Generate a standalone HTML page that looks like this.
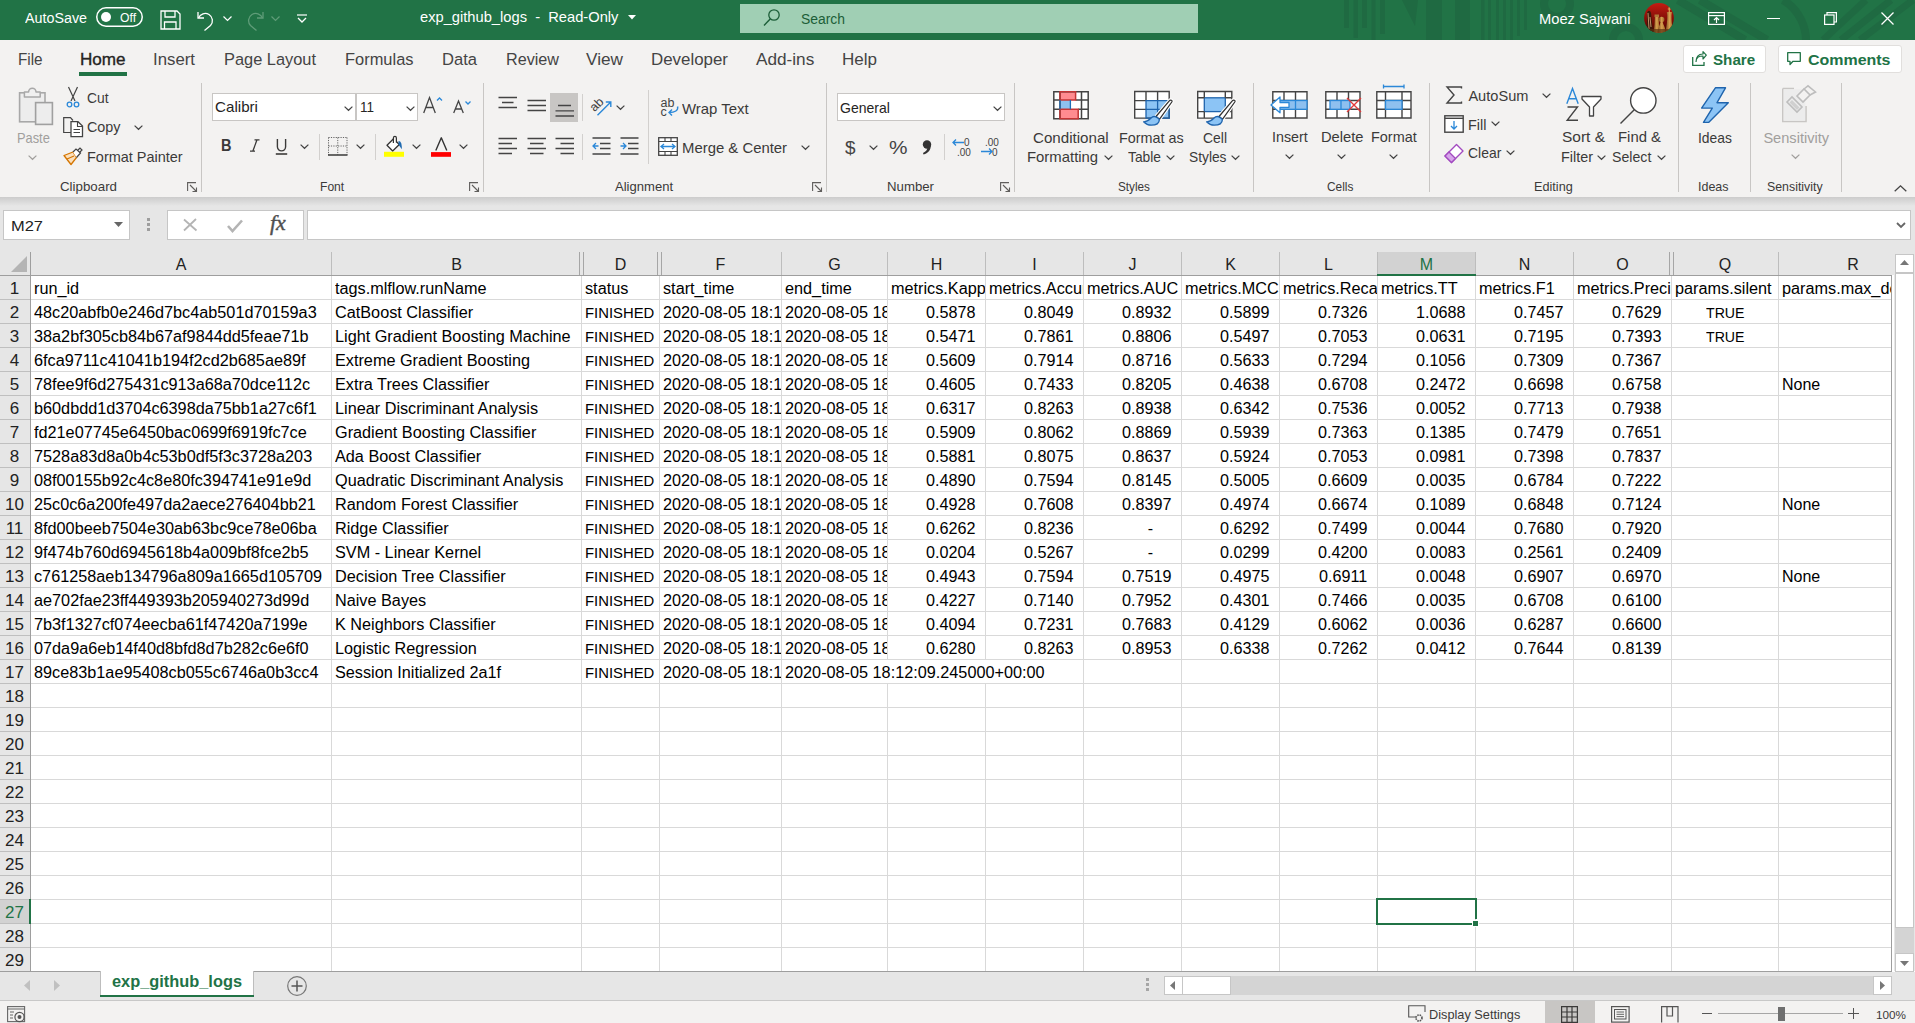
<!DOCTYPE html><html><head><meta charset="utf-8"><style>
html,body{margin:0;padding:0;width:1915px;height:1023px;overflow:hidden;background:#fff;font-family:"Liberation Sans",sans-serif;}
.t{position:absolute;white-space:pre;line-height:normal;}
.r{position:absolute;}
svg.r{overflow:visible}
</style></head><body>
<div class="r" style="left:0px;top:0px;width:1915px;height:40px;background:#217346"></div>
<svg class="r" style="left:0;top:0" width="1915" height="40"><rect x="1344" y="0" width="5" height="28" fill="#1f6a42"/><rect x="1353.5" y="0" width="4.5" height="38" fill="#1f6a42"/><rect x="1362" y="0" width="5" height="28" fill="#1f6a42"/><rect x="1371.5" y="0" width="4.0" height="40" fill="#1f6a42"/><rect x="1380" y="0" width="5" height="34" fill="#1f6a42"/><rect x="1426" y="0" width="16" height="40" fill="#1f6a42"/><rect x="1455" y="0" width="15" height="40" fill="#1f6a42"/><rect x="1481" y="0" width="3.5" height="40" fill="#1f6a42"/><rect x="1488" y="0" width="3" height="40" fill="#1f6a42"/><rect x="1496" y="0" width="3" height="40" fill="#1f6a42"/><rect x="1503" y="0" width="3" height="40" fill="#1f6a42"/><rect x="1510" y="0" width="3" height="40" fill="#1f6a42"/><rect x="1517" y="0" width="3" height="36" fill="#1f6a42"/><rect x="1524" y="0" width="3" height="30" fill="#1f6a42"/><path d="M1402 0 H1418 L1415 26 Z" fill="#1f6a42"/><circle cx="1557" cy="4" r="13" fill="none" stroke="#1f6a42" stroke-width="8"/><circle cx="1626" cy="40" r="13" fill="none" stroke="#1f6a42" stroke-width="8"/><path d="M1678 0 L1745 40 M1700 0 L1767 40" stroke="#1f6a42" stroke-width="8"/><path d="M1783 0 C1800 10 1806 28 1806 40" stroke="#1f6a42" stroke-width="8" fill="none"/><path d="M1823 40 L1866 0 M1841 40 L1891 0 M1860 40 L1913 0" stroke="#1f6a42" stroke-width="7"/></svg>
<div class="r" style="left:740px;top:4px;width:458px;height:29px;background:#a0cfb4"></div>
<div class="t" style="left:25.00px;top:9.90px;font-size:14.7px;color:#fff;transform:scaleX(0.9733);transform-origin:0 0;">AutoSave</div>
<svg class="r" style="left:96px;top:7px" width="47" height="20" viewBox="0 0 47 20" fill="none"><rect x="0.75" y="0.75" width="45.5" height="18.5" rx="9.25" stroke="#fff" stroke-width="1.5"/><circle cx="10" cy="10" r="5" fill="#fff"/></svg>
<div class="t" style="left:119.70px;top:10.08px;font-size:13.5px;color:#fff;transform:scaleX(0.9014);transform-origin:0 0;">Off</div>
<svg class="r" style="left:160px;top:10px" width="21" height="20" viewBox="0 0 21 20" fill="none"><path d="M1 1 H17 L20 4 V19 H1 Z" stroke="#fff" stroke-width="1.3"/><path d="M5 1 V7 H15 V1" stroke="#fff" stroke-width="1.3"/><path d="M4.5 19 V12 H16 V19" stroke="#fff" stroke-width="1.3"/></svg>
<svg class="r" style="left:196px;top:10px" width="20" height="20" viewBox="0 0 20 20" fill="none"><path d="M2 2 V8 H8" stroke="#fff" stroke-width="1.3"/><path d="M2.5 8 A7.2 7.2 0 1 1 14.5 15.5 L8.5 20.5" stroke="#fff" stroke-width="1.3"/></svg>
<svg class="r" style="left:223px;top:16px" width="9" height="5" viewBox="0 0 9 5" fill="none"><path d="M0.5 0.5 L4.5 4.5 L8.5 0.5" stroke="#fff" stroke-width="1.2"/></svg>
<svg class="r" style="left:245px;top:10px" width="20" height="20" viewBox="0 0 20 20" fill="none"><path d="M18 2 V8 H12" stroke="#5f9c78" stroke-width="1.3"/><path d="M17.5 8 A7.2 7.2 0 1 0 5.5 15.5 L11.5 20.5" stroke="#5f9c78" stroke-width="1.3"/></svg>
<svg class="r" style="left:271px;top:16px" width="9" height="5" viewBox="0 0 9 5" fill="none"><path d="M0.5 0.5 L4.5 4.5 L8.5 0.5" stroke="#5f9c78" stroke-width="1.2"/></svg>
<svg class="r" style="left:297px;top:14px" width="10" height="10" viewBox="0 0 10 10" fill="none"><path d="M0 1 H10" stroke="#fff" stroke-width="1.2"/><path d="M1 4 L5 8 L9 4" stroke="#fff" stroke-width="1.3"/></svg>
<div class="t" style="left:420.30px;top:8.69px;font-size:14.6px;color:#fff;transform:scaleX(1.0065);transform-origin:0 0;">exp_github_logs  -  Read-Only</div>
<svg class="r" style="left:628px;top:15px" width="8" height="5" viewBox="0 0 8 5" fill="none"><path d="M0 0 H8 L4 4.5 Z" fill="#fff"/></svg>
<svg class="r" style="left:763px;top:9px" width="17" height="18" viewBox="0 0 17 18" fill="none"><circle cx="11" cy="6" r="5.2" stroke="#1c5e38" stroke-width="1.3"/><path d="M7.4 9.8 L1 16.5" stroke="#1c5e38" stroke-width="1.4"/></svg>
<div class="t" style="left:800.50px;top:10.83px;font-size:14px;color:#1c5e38;transform:scaleX(0.9922);transform-origin:0 0;">Search</div>
<div class="t" style="left:1539.00px;top:10.79px;font-size:14.6px;color:#fff;transform:scaleX(1.0074);transform-origin:0 0;">Moez Sajwani</div>
<svg class="r" style="left:1644px;top:3px" width="30" height="30" viewBox="0 0 30 30"><defs><clipPath id="av"><circle cx="15" cy="15" r="14.9"/></clipPath><linearGradient id="ag" x1="0" y1="0" x2="0" y2="1"><stop offset="0" stop-color="#c41c12"/><stop offset="0.7" stop-color="#6e0a05"/><stop offset="1" stop-color="#3a0804"/></linearGradient><linearGradient id="gd" x1="0" y1="0" x2="1" y2="0"><stop offset="0" stop-color="#7a4a1a"/><stop offset="0.5" stop-color="#d8a050"/><stop offset="1" stop-color="#9a6020"/></linearGradient></defs><g clip-path="url(#av)"><rect width="30" height="30" fill="url(#ag)"/><path d="M3 30 V10 C4 7 6 7 7 10 L8 20 L9 30 Z" fill="#3a1a0a"/><path d="M4 10 L5 26 M6 14 L7 24" stroke="#e0b080" stroke-width="0.8"/><path d="M9.5 30 L10.5 22 L11 13 H14.5 L15 22 L16 30 Z" fill="url(#gd)"/><rect x="10.5" y="11.5" width="4.5" height="2.5" fill="#b07838"/><circle cx="17.6" cy="16.5" r="2.8" fill="url(#gd)"/><path d="M13.5 30 C14 24 16 22 16.5 19 H18.7 C19.2 22 21.5 24 22 30 Z" fill="url(#gd)"/><path d="M21.5 30 C22 24 23.5 20 23.3 12 L22.8 9 H28 L27.5 12 C27.3 20 28.5 24 29.5 30 Z" fill="url(#gd)"/><path d="M25.3 4 V9 M23.8 6 H26.8" stroke="#d8a050" stroke-width="1.2"/><rect x="0" y="26" width="30" height="4" fill="#5a3010" opacity="0.7"/></g></svg>
<svg class="r" style="left:1708px;top:12px" width="17" height="13" viewBox="0 0 17 13" fill="none"><rect x="0.6" y="0.6" width="15.8" height="11.8" stroke="#fff" stroke-width="1.2"/><path d="M0.6 3.6 H16.4" stroke="#fff" stroke-width="1.2"/><path d="M8.5 11 V5.5 M6 8 L8.5 5.5 L11 8" stroke="#fff" stroke-width="1.2"/></svg>
<div class="r" style="left:1767px;top:18px;width:13px;height:1.3px;background:#fff"></div>
<svg class="r" style="left:1824px;top:12px" width="13" height="13" viewBox="0 0 13 13" fill="none"><rect x="0.6" y="3" width="9.4" height="9.4" stroke="#fff" stroke-width="1.2"/><path d="M3 3 V0.6 H12.4 V10 H10" stroke="#fff" stroke-width="1.2"/></svg>
<svg class="r" style="left:1881px;top:12px" width="13" height="13" viewBox="0 0 13 13" fill="none"><path d="M0.5 0.5 L12.5 12.5 M12.5 0.5 L0.5 12.5" stroke="#fff" stroke-width="1.3"/></svg>
<div class="r" style="left:0px;top:40px;width:1915px;height:157px;background:#f3f2f1"></div>
<div class="r" style="left:0px;top:197px;width:1915px;height:9px;background:linear-gradient(#cccccc,#e6e6e6)"></div>
<div class="t" style="left:18.00px;top:49.13px;font-size:17.2px;color:#444;transform:scaleX(0.8885);transform-origin:0 0;">File</div>
<div class="t" style="left:79.70px;top:49.13px;font-size:17.2px;color:#252423;transform:scaleX(0.9947);transform-origin:0 0;-webkit-text-stroke:0.35px #252423;">Home</div>
<div class="t" style="left:153.00px;top:49.13px;font-size:17.2px;color:#444;transform:scaleX(0.9767);transform-origin:0 0;">Insert</div>
<div class="t" style="left:224.00px;top:49.13px;font-size:17.2px;color:#444;transform:scaleX(0.9528);transform-origin:0 0;">Page Layout</div>
<div class="t" style="left:345.00px;top:49.13px;font-size:17.2px;color:#444;transform:scaleX(0.9564);transform-origin:0 0;">Formulas</div>
<div class="t" style="left:442.00px;top:49.13px;font-size:17.2px;color:#444;transform:scaleX(0.9639);transform-origin:0 0;">Data</div>
<div class="t" style="left:506.00px;top:49.13px;font-size:17.2px;color:#444;transform:scaleX(0.9407);transform-origin:0 0;">Review</div>
<div class="t" style="left:586.00px;top:49.13px;font-size:17.2px;color:#444;">View</div>
<div class="t" style="left:651.00px;top:49.13px;font-size:17.2px;color:#444;transform:scaleX(0.9828);transform-origin:0 0;">Developer</div>
<div class="t" style="left:756.00px;top:49.13px;font-size:17.2px;color:#444;">Add-ins</div>
<div class="t" style="left:842.00px;top:49.13px;font-size:17.2px;color:#444;transform:scaleX(0.9903);transform-origin:0 0;">Help</div>
<div class="r" style="left:79px;top:72px;width:48px;height:4px;background:#217346"></div>
<div class="r" style="left:1683px;top:44.5px;width:83px;height:28px;background:#fff;border:1px solid #e1dfdd;border-radius:3px;box-sizing:border-box"></div>
<div class="r" style="left:1777.5px;top:44.5px;width:124px;height:28px;background:#fff;border:1px solid #e1dfdd;border-radius:3px;box-sizing:border-box"></div>
<svg class="r" style="left:1692px;top:51px" width="15" height="15" viewBox="0 0 15 15" fill="none"><path d="M0.7 6 V14.3 H12 V11" stroke="#217346" stroke-width="1.3"/><path d="M4 11 C4 6 7 5 11 5 V8 L14.3 4.2 L11 0.7 V3 C6 3 4 6 4 11" stroke="#217346" stroke-width="1.2" stroke-linejoin="round"/></svg>
<div class="t" style="left:1712.60px;top:50.67px;font-size:15.5px;color:#217346;font-weight:bold;transform:scaleX(0.9793);transform-origin:0 0;">Share</div>
<svg class="r" style="left:1787px;top:52px" width="15" height="14" viewBox="0 0 15 14" fill="none"><path d="M0.7 0.7 H13.3 V9.3 H6 L3 12.5 V9.3 H0.7 Z" stroke="#217346" stroke-width="1.3" stroke-linejoin="round"/></svg>
<div class="t" style="left:1807.70px;top:50.67px;font-size:15.5px;color:#217346;font-weight:bold;transform:scaleX(1.0300);transform-origin:0 0;">Comments</div>
<div class="r" style="left:201px;top:83px;width:1px;height:109px;background:#c8c6c4"></div>
<div class="r" style="left:483px;top:83px;width:1px;height:109px;background:#c8c6c4"></div>
<div class="r" style="left:826px;top:83px;width:1px;height:109px;background:#c8c6c4"></div>
<div class="r" style="left:1014px;top:83px;width:1px;height:109px;background:#c8c6c4"></div>
<div class="r" style="left:1253px;top:83px;width:1px;height:109px;background:#c8c6c4"></div>
<div class="r" style="left:1429px;top:83px;width:1px;height:109px;background:#c8c6c4"></div>
<div class="r" style="left:1678px;top:83px;width:1px;height:109px;background:#c8c6c4"></div>
<div class="r" style="left:1750px;top:83px;width:1px;height:109px;background:#c8c6c4"></div>
<div class="r" style="left:1841px;top:83px;width:1px;height:109px;background:#c8c6c4"></div>
<div class="r" style="left:648px;top:90px;width:1px;height:74px;background:#d2d0ce"></div>
<div class="r" style="left:582px;top:94px;width:1px;height:27px;background:#d2d0ce"></div>
<div class="r" style="left:582px;top:134px;width:1px;height:26px;background:#d2d0ce"></div>
<div class="r" style="left:319px;top:134px;width:1px;height:26px;background:#d2d0ce"></div>
<div class="r" style="left:375px;top:134px;width:1px;height:26px;background:#d2d0ce"></div>
<div class="r" style="left:944px;top:134px;width:1px;height:26px;background:#d2d0ce"></div>
<div class="t" style="left:59.60px;top:180.10px;font-size:12.6px;color:#3b3a39;transform:scaleX(1.0580);transform-origin:0 0;">Clipboard</div>
<div class="t" style="left:319.70px;top:180.10px;font-size:12.6px;color:#3b3a39;transform:scaleX(0.9608);transform-origin:0 0;">Font</div>
<div class="t" style="left:615.00px;top:180.10px;font-size:12.6px;color:#3b3a39;transform:scaleX(1.0360);transform-origin:0 0;">Alignment</div>
<div class="t" style="left:886.60px;top:180.10px;font-size:12.6px;color:#3b3a39;transform:scaleX(1.0499);transform-origin:0 0;">Number</div>
<div class="t" style="left:1117.50px;top:180.10px;font-size:12.6px;color:#3b3a39;transform:scaleX(0.9330);transform-origin:0 0;">Styles</div>
<div class="t" style="left:1327.40px;top:180.10px;font-size:12.6px;color:#3b3a39;transform:scaleX(0.9434);transform-origin:0 0;">Cells</div>
<div class="t" style="left:1533.60px;top:180.10px;font-size:12.6px;color:#3b3a39;transform:scaleX(1.0052);transform-origin:0 0;">Editing</div>
<div class="t" style="left:1698.00px;top:180.10px;font-size:12.6px;color:#3b3a39;transform:scaleX(0.9904);transform-origin:0 0;">Ideas</div>
<div class="t" style="left:1767.30px;top:180.10px;font-size:12.6px;color:#3b3a39;transform:scaleX(0.9808);transform-origin:0 0;">Sensitivity</div>
<svg class="r" style="left:187px;top:182px" width="11" height="11" viewBox="0 0 11 11" fill="none"><path d="M0.6 9 V0.6 H9" stroke="#605e5c" stroke-width="1.1"/><path d="M3 3 L9.5 9.5 M5.5 9.5 H9.5 V5.5" stroke="#605e5c" stroke-width="1.1"/></svg>
<svg class="r" style="left:469px;top:182px" width="11" height="11" viewBox="0 0 11 11" fill="none"><path d="M0.6 9 V0.6 H9" stroke="#605e5c" stroke-width="1.1"/><path d="M3 3 L9.5 9.5 M5.5 9.5 H9.5 V5.5" stroke="#605e5c" stroke-width="1.1"/></svg>
<svg class="r" style="left:812px;top:182px" width="11" height="11" viewBox="0 0 11 11" fill="none"><path d="M0.6 9 V0.6 H9" stroke="#605e5c" stroke-width="1.1"/><path d="M3 3 L9.5 9.5 M5.5 9.5 H9.5 V5.5" stroke="#605e5c" stroke-width="1.1"/></svg>
<svg class="r" style="left:1000px;top:182px" width="11" height="11" viewBox="0 0 11 11" fill="none"><path d="M0.6 9 V0.6 H9" stroke="#605e5c" stroke-width="1.1"/><path d="M3 3 L9.5 9.5 M5.5 9.5 H9.5 V5.5" stroke="#605e5c" stroke-width="1.1"/></svg>
<svg class="r" style="left:18px;top:86px" width="36" height="40" viewBox="0 0 36 40" fill="none"><rect x="1.6" y="6.8" width="25.4" height="29" fill="#ededed" stroke="#a8a8a8" stroke-width="1.6"/><path d="M10.6 6 A3.7 3.7 0 0 1 18 6 H22.2 V11 H6.4 V6 Z" fill="#f0f0f0" stroke="#a8a8a8" stroke-width="1.5" stroke-linejoin="round"/><rect x="17.6" y="16.6" width="16.8" height="21.8" fill="#ededed" stroke="#a0a0a0" stroke-width="1.6"/></svg>
<div class="t" style="left:16.80px;top:129.59px;font-size:14.6px;color:#a19f9d;transform:scaleX(0.8794);transform-origin:0 0;">Paste</div>
<svg class="r" style="left:27.799999999999997px;top:154.5px" width="9.0" height="5.0" viewBox="0 0 9.0 5.0" fill="none"><path d="M0.6 0.6 L4.5 4.3 L8.4 0.6" stroke="#a19f9d" stroke-width="1.2"/></svg>
<svg class="r" style="left:66px;top:87px" width="14" height="21" viewBox="0 0 14 21" fill="none"><path d="M2.5 0 L9 14 M11.5 0 L5 14" stroke="#444" stroke-width="1.2"/><circle cx="3.5" cy="17.5" r="2.3" stroke="#2b88d8" stroke-width="1.3"/><circle cx="10.5" cy="17.5" r="2.3" stroke="#2b88d8" stroke-width="1.3"/></svg>
<div class="t" style="left:87.40px;top:89.69px;font-size:14.6px;color:#3b3a39;transform:scaleX(0.9514);transform-origin:0 0;">Cut</div>
<svg class="r" style="left:62.5px;top:117px" width="21" height="21" viewBox="0 0 21 21" fill="none"><path d="M8 15.5 H0.7 V0.7 H7.5 L10 3.5" stroke="#444" stroke-width="1.2"/><path d="M8 4.7 H15 L19.5 9 V19.6 H8 Z" fill="#fff" stroke="#444" stroke-width="1.3"/><path d="M14.5 5 V9.5 H19.5" stroke="#444" stroke-width="1.1"/><path d="M10.5 12.5 H17 M10.5 15.5 H17" stroke="#444" stroke-width="1.1"/></svg>
<div class="t" style="left:87.40px;top:118.99px;font-size:14.6px;color:#3b3a39;transform:scaleX(0.9835);transform-origin:0 0;">Copy</div>
<svg class="r" style="left:134.0px;top:125.0px" width="9.0" height="5.0" viewBox="0 0 9.0 5.0" fill="none"><path d="M0.6 0.6 L4.5 4.3 L8.4 0.6" stroke="#444" stroke-width="1.2"/></svg>
<svg class="r" style="left:63px;top:147px" width="20" height="19" viewBox="0 0 20 19" fill="none"><path d="M1 8.5 L10 5 L13.5 10.5 L8 17.5 Z" fill="#fbe0bd" stroke="#d47500" stroke-width="1.3" stroke-linejoin="round"/><path d="M4 12 L11 9" stroke="#d47500" stroke-width="1.1"/><path d="M10 5 L13 2 L17.5 6 L13.5 10.5" fill="#fff" stroke="#444" stroke-width="1.2"/><path d="M14.5 3.5 L17 1 L19 3 L16.5 5.5" stroke="#444" stroke-width="1.2"/></svg>
<div class="t" style="left:87.40px;top:149.49px;font-size:14.6px;color:#3b3a39;transform:scaleX(0.9910);transform-origin:0 0;">Format Painter</div>
<div class="r" style="left:212px;top:93px;width:144px;height:28px;background:#fff;border:1px solid #c8c6c4;box-sizing:border-box"></div>
<div class="r" style="left:356px;top:93px;width:62px;height:28px;background:#fff;border:1px solid #c8c6c4;box-sizing:border-box"></div>
<div class="t" style="left:215.00px;top:99.39px;font-size:14.6px;color:#252423;transform:scaleX(1.0393);transform-origin:0 0;">Calibri</div>
<svg class="r" style="left:343.9px;top:105.5px" width="9.0" height="5.0" viewBox="0 0 9.0 5.0" fill="none"><path d="M0.6 0.6 L4.5 4.3 L8.4 0.6" stroke="#444" stroke-width="1.2"/></svg>
<div class="t" style="left:360.00px;top:99.39px;font-size:14.6px;color:#252423;transform:scaleX(0.9247);transform-origin:0 0;">11</div>
<svg class="r" style="left:406.1px;top:105.5px" width="9.0" height="5.0" viewBox="0 0 9.0 5.0" fill="none"><path d="M0.6 0.6 L4.5 4.3 L8.4 0.6" stroke="#444" stroke-width="1.2"/></svg>
<svg class="r" style="left:423px;top:96px" width="20" height="18" viewBox="0 0 20 18" fill="none"><path d="M0.7 17 L6.5 1.5 L12.3 17 M2.8 11.5 H10.2" stroke="#444" stroke-width="1.3"/><path d="M14 4.5 L16.5 2 L19 4.5" stroke="#2b88d8" stroke-width="1.3"/></svg>
<svg class="r" style="left:453px;top:100px" width="18" height="14" viewBox="0 0 18 14" fill="none"><path d="M0.7 13 L5.5 1 L10.3 13 M2.5 9 H8.5" stroke="#444" stroke-width="1.3"/><path d="M12.5 1.5 L15 4 L17.5 1.5" stroke="#2b88d8" stroke-width="1.3"/></svg>
<div class="t" style="left:220.50px;top:136.52px;font-size:16px;color:#3b3a39;font-weight:bold;transform:scaleX(0.9081);transform-origin:0 0;">B</div>
<svg class="r" style="left:249px;top:139px" width="12" height="13" viewBox="0 0 12 13" fill="none"><path d="M5.5 0.8 H10.5 M8 0.8 L3.8 12.2 M1 12.2 H6" stroke="#3b3a39" stroke-width="1.3"/></svg>
<svg class="r" style="left:275px;top:139px" width="13" height="17" viewBox="0 0 13 17" fill="none"><path d="M2.4 0 V7.8 A4.1 4.1 0 0 0 10.6 7.8 V0" stroke="#3b3a39" stroke-width="1.4"/><path d="M0.8 15 H12.2" stroke="#3b3a39" stroke-width="1.6"/></svg>
<svg class="r" style="left:300.0px;top:144.1px" width="9.0" height="5.0" viewBox="0 0 9.0 5.0" fill="none"><path d="M0.6 0.6 L4.5 4.3 L8.4 0.6" stroke="#444" stroke-width="1.2"/></svg>
<svg class="r" style="left:328px;top:137px" width="20" height="19" viewBox="0 0 20 19" fill="none"><path d="M0.5 0.5 H19 M0.5 0.5 V18 M19 0.5 V18 M9.75 0.5 V18 M0.5 9 H19" stroke="#666" stroke-width="1" stroke-dasharray="1.2 1.2"/><path d="M0 18 H19.5" stroke="#444" stroke-width="1.6"/></svg>
<svg class="r" style="left:356.0px;top:144.1px" width="9.0" height="5.0" viewBox="0 0 9.0 5.0" fill="none"><path d="M0.6 0.6 L4.5 4.3 L8.4 0.6" stroke="#444" stroke-width="1.2"/></svg>
<svg class="r" style="left:384px;top:136px" width="20" height="22" viewBox="0 0 20 22" fill="none"><path d="M12.3 5.5 L15.3 8.5 L8.7 15 L3 9.3 L9.3 3" fill="#fff" stroke="#333" stroke-width="1.3" stroke-linejoin="round"/><path d="M9.4 7 V2 C9.4 -0.2 12.4 -0.2 12.4 2 V6.5" stroke="#333" stroke-width="1.2"/><path d="M14.5 5 C17 5 18 8.5 17.8 13.3 C16.5 11.5 15.5 10 14.5 8.5 Z" fill="#1f6ab0"/><rect x="0" y="15.8" width="20" height="5" fill="#ffff00"/></svg>
<svg class="r" style="left:412.1px;top:144.1px" width="9.0" height="5.0" viewBox="0 0 9.0 5.0" fill="none"><path d="M0.6 0.6 L4.5 4.3 L8.4 0.6" stroke="#444" stroke-width="1.2"/></svg>
<svg class="r" style="left:431px;top:136px" width="20" height="22" viewBox="0 0 20 22" fill="none"><path d="M4.8 14.5 L10.3 1.8 L15.8 14.5" stroke="#333" stroke-width="1.4" stroke-linejoin="round"/><rect x="0" y="16.1" width="20" height="4.7" fill="#ff0000"/></svg>
<svg class="r" style="left:459.0px;top:144.1px" width="9.0" height="5.0" viewBox="0 0 9.0 5.0" fill="none"><path d="M0.6 0.6 L4.5 4.3 L8.4 0.6" stroke="#444" stroke-width="1.2"/></svg>
<svg class="r" style="left:498px;top:96px" width="20" height="14" viewBox="0 0 20 14" fill="none"><path d="M0.5 1.5 H19 M4 6.5 H15.5 M0.5 11.5 H19" stroke="#444" stroke-width="1.3"/></svg>
<svg class="r" style="left:527px;top:99px" width="20" height="14" viewBox="0 0 20 14" fill="none"><path d="M0.5 1.5 H19 M0.5 6.5 H19 M0.5 11.5 H19" stroke="#444" stroke-width="1.3"/></svg>
<div class="r" style="left:550px;top:93px;width:28px;height:29px;background:#c8c6c4"></div>
<svg class="r" style="left:555px;top:104px" width="20" height="14" viewBox="0 0 20 14" fill="none"><path d="M3 1.5 H16 M0.5 6.8 H19 M0.5 12 H19" stroke="#444" stroke-width="1.3"/></svg>
<svg class="r" style="left:498px;top:137px" width="20" height="19" viewBox="0 0 20 19" fill="none"><path d="M0.5 1.5 H19 M0.5 6.5 H14 M0.5 11.5 H19 M0.5 16.5 H14" stroke="#444" stroke-width="1.3"/></svg>
<svg class="r" style="left:527px;top:137px" width="20" height="19" viewBox="0 0 20 19" fill="none"><path d="M0.5 1.5 H19 M3 6.5 H16.5 M0.5 11.5 H19 M3 16.5 H16.5" stroke="#444" stroke-width="1.3"/></svg>
<svg class="r" style="left:555px;top:137px" width="20" height="19" viewBox="0 0 20 19" fill="none"><path d="M0.5 1.5 H19 M5.5 6.5 H19 M0.5 11.5 H19 M5.5 16.5 H19" stroke="#444" stroke-width="1.3"/></svg>
<svg class="r" style="left:590px;top:96px" width="22" height="20" viewBox="0 0 22 20" fill="none"><text x="4.5" y="16.3" font-size="12.5" font-family="Liberation Sans" fill="#444" transform="rotate(-45 4.5 16.3)">ab</text><path d="M7.5 19.3 L20.8 6 M15.8 6 H20.8 V11" stroke="#2b88d8" stroke-width="1.4"/></svg>
<svg class="r" style="left:615.8px;top:104.9px" width="9.0" height="5.0" viewBox="0 0 9.0 5.0" fill="none"><path d="M0.6 0.6 L4.5 4.3 L8.4 0.6" stroke="#444" stroke-width="1.2"/></svg>
<svg class="r" style="left:592px;top:137px" width="19" height="19" viewBox="0 0 19 19" fill="none"><path d="M0.5 1 H18.5 M8 6.5 H18.5 M8 11.5 H18.5 M0.5 17 H18.5" stroke="#444" stroke-width="1.3"/><path d="M6.5 9 H1 M4 6 L1 9 L4 12" stroke="#2b88d8" stroke-width="1.3"/></svg>
<svg class="r" style="left:620px;top:137px" width="19" height="19" viewBox="0 0 19 19" fill="none"><path d="M0.5 1 H18.5 M8 6.5 H18.5 M8 11.5 H18.5 M0.5 17 H18.5" stroke="#444" stroke-width="1.3"/><path d="M0.5 9 H6 M3 6 L6 9 L3 12" stroke="#2b88d8" stroke-width="1.3"/></svg>
<svg class="r" style="left:660px;top:96px" width="20" height="21" viewBox="0 0 20 21" fill="none"><text x="0.5" y="10.5" font-size="12.5" font-family="Liberation Sans" fill="#444">ab</text><text x="0.5" y="19.8" font-size="12.5" font-family="Liberation Sans" fill="#444">c</text><path d="M17.6 10.5 C18.5 14.5 15 16.5 9 16.5 M12 13.5 L9 16.5 L12 19.5" stroke="#2b88d8" stroke-width="1.4"/></svg>
<div class="t" style="left:682.40px;top:100.59px;font-size:14.6px;color:#3b3a39;transform:scaleX(1.0226);transform-origin:0 0;">Wrap Text</div>
<svg class="r" style="left:657.5px;top:136.5px" width="20" height="19" viewBox="0 0 20 19" fill="none"><rect x="0.7" y="0.7" width="18.6" height="17.6" fill="#fff" stroke="#444" stroke-width="1.3"/><path d="M0.7 4.5 H19.3 M0.7 14.5 H19.3 M7 0.7 V4.5 M13 0.7 V4.5 M7 14.5 V18.3 M13 14.5 V18.3" stroke="#444" stroke-width="1.1"/><path d="M3 9.5 H17 M6 7 L3 9.5 L6 12 M14 7 L17 9.5 L14 12" stroke="#2b88d8" stroke-width="1.3"/></svg>
<div class="t" style="left:682.40px;top:139.79px;font-size:14.6px;color:#3b3a39;transform:scaleX(1.0199);transform-origin:0 0;">Merge &amp; Center</div>
<svg class="r" style="left:800.8px;top:145.1px" width="9.0" height="5.0" viewBox="0 0 9.0 5.0" fill="none"><path d="M0.6 0.6 L4.5 4.3 L8.4 0.6" stroke="#444" stroke-width="1.2"/></svg>
<div class="r" style="left:837px;top:93px;width:168px;height:28px;background:#fff;border:1px solid #c8c6c4;box-sizing:border-box"></div>
<div class="t" style="left:840.20px;top:99.59px;font-size:14.6px;color:#252423;transform:scaleX(0.9597);transform-origin:0 0;">General</div>
<svg class="r" style="left:992.7px;top:105.5px" width="9.0" height="5.0" viewBox="0 0 9.0 5.0" fill="none"><path d="M0.6 0.6 L4.5 4.3 L8.4 0.6" stroke="#444" stroke-width="1.2"/></svg>
<div class="t" style="left:845.00px;top:138.21px;font-size:18px;color:#444;transform:scaleX(1.0484);transform-origin:0 0;">$</div>
<svg class="r" style="left:868.5px;top:145.0px" width="9.0" height="5.0" viewBox="0 0 9.0 5.0" fill="none"><path d="M0.6 0.6 L4.5 4.3 L8.4 0.6" stroke="#444" stroke-width="1.2"/></svg>
<div class="t" style="left:888.50px;top:138.21px;font-size:18px;color:#444;transform:scaleX(1.1562);transform-origin:0 0;">%</div>
<svg class="r" style="left:922px;top:140px" width="10" height="15" viewBox="0 0 10 15" fill="none"><circle cx="5" cy="4.5" r="4.2" fill="#333"/><path d="M8.8 5 C9 10 6 13.5 1.5 14.5 L1 13 C4 11.5 5.5 9.5 5.5 7" fill="#333"/></svg>
<svg class="r" style="left:952px;top:137px" width="21" height="19" viewBox="0 0 21 19" fill="none"><text x="12" y="9" font-size="10" font-family="Liberation Sans" fill="#444">0</text><text x="5" y="18.5" font-size="10" font-family="Liberation Sans" fill="#444">.00</text><path d="M12 5.5 H1 M4 2.5 L1 5.5 L4 8.5" stroke="#2b88d8" stroke-width="1.3"/></svg>
<svg class="r" style="left:980px;top:137px" width="21" height="19" viewBox="0 0 21 19" fill="none"><text x="5" y="9" font-size="10" font-family="Liberation Sans" fill="#444">.00</text><text x="12" y="18.5" font-size="10" font-family="Liberation Sans" fill="#444">0</text><path d="M1 14.5 H12 M9 11.5 L12 14.5 L9 17.5" stroke="#2b88d8" stroke-width="1.3"/></svg>
<svg class="r" style="left:1053px;top:91px" width="36" height="29" viewBox="0 0 36 29" fill="none"><rect x="0.8" y="0.8" width="34.4" height="26.9" fill="#fff"/><rect x="7" y="0.8" width="15.6" height="8.3" fill="#ff8c90"/><rect x="7" y="9.1" width="10.4" height="9.2" fill="#8ec0ef"/><rect x="7" y="18.3" width="18.2" height="9.4" fill="#ff8c90"/><path d="M0.8 0.8 H35.2 V27.7 H0.8 Z M0.8 9.1 H7 M22.6 9.1 H35.2 M0.8 18.3 H7 M25.2 18.3 H35.2 M7 0.8 V27.7 M28.5 0.8 V27.7" stroke="#444" stroke-width="1.5"/><path d="M7 0.8 H22.6 V9.1 H7 Z M7 18.3 H25.2 V27.7 H7 Z" stroke="#c43535" stroke-width="1.5"/><path d="M7 9.1 V18.3 M17.4 9.1 V18.3" stroke="#1f6db5" stroke-width="1.3"/></svg>
<div class="t" style="left:1032.60px;top:129.79px;font-size:14.6px;color:#3b3a39;transform:scaleX(1.0370);transform-origin:0 0;">Conditional</div>
<div class="t" style="left:1027.40px;top:149.29px;font-size:14.6px;color:#3b3a39;transform:scaleX(1.0198);transform-origin:0 0;">Formatting</div>
<svg class="r" style="left:1103.8px;top:155.0px" width="9.0" height="5.0" viewBox="0 0 9.0 5.0" fill="none"><path d="M0.6 0.6 L4.5 4.3 L8.4 0.6" stroke="#444" stroke-width="1.2"/></svg>
<svg class="r" style="left:1134px;top:91px" width="40" height="36" viewBox="0 0 40 36" fill="none"><rect x="0.7" y="0.5" width="34.5" height="26.6" fill="#fff"/><rect x="12" y="9.6" width="23.2" height="17.5" fill="#8cc4f5"/><path d="M0.7 0.5 H35.2 V27.1 H0.7 Z M0.7 9.6 H12 M0.7 18.4 H12 M12 0.5 V9.6 M23.6 0.5 V9.6" stroke="#444" stroke-width="1.4"/><path d="M12 9.6 H35.2 V27.1 H12 Z M12 18.4 H35.2 M23.6 9.6 V27.1" stroke="#1f64ad" stroke-width="1.3"/><path d="M22 25.5 L35.3 9.8 C36.6 8.3 38.8 9.3 37.8 11 L25.6 28.2 Z" fill="none" stroke="#fff" stroke-width="3.4"/><path d="M22 25.5 L35.3 9.8 C36.6 8.3 38.8 9.3 37.8 11 L25.6 28.2 Z" fill="#fff" stroke="#333" stroke-width="1.25" stroke-linejoin="round"/><path d="M9.6 30.8 C12.8 31 14.8 29.2 16.8 27.2 C18.4 25.6 21 25 23.2 26.6 L25.4 28.6 C25.2 32 22.2 34.2 17.2 34.2 C14 34.2 11.5 32.8 9.6 30.8 Z" fill="#8cc4f5" stroke="#1f64ad" stroke-width="1.3" stroke-linejoin="round"/></svg>
<div class="t" style="left:1119.40px;top:129.79px;font-size:14.6px;color:#3b3a39;transform:scaleX(0.9839);transform-origin:0 0;">Format as</div>
<div class="t" style="left:1128.00px;top:149.29px;font-size:14.6px;color:#3b3a39;transform:scaleX(0.9462);transform-origin:0 0;">Table</div>
<svg class="r" style="left:1165.9px;top:155.0px" width="9.0" height="5.0" viewBox="0 0 9.0 5.0" fill="none"><path d="M0.6 0.6 L4.5 4.3 L8.4 0.6" stroke="#444" stroke-width="1.2"/></svg>
<svg class="r" style="left:1197px;top:91px" width="40" height="36" viewBox="0 0 40 36" fill="none"><rect x="0.7" y="0.5" width="34.1" height="26.6" fill="#fff"/><rect x="7.3" y="6.8" width="21" height="13.8" fill="#8cc4f5" stroke="#1f64ad" stroke-width="1.3"/><path d="M0.7 0.5 H34.8 V27.1 H0.7 Z M0.7 6.8 H7.3 M28.3 6.8 H34.8 M0.7 20.6 H7.3 M28.3 20.6 H34.8 M7.3 0.5 V6.8 M28.3 0.5 V6.8 M7.3 20.6 V27.1 M28.3 20.6 V27.1" stroke="#444" stroke-width="1.4"/><path d="M22 25.5 L35.3 9.8 C36.6 8.3 38.8 9.3 37.8 11 L25.6 28.2 Z" fill="none" stroke="#fff" stroke-width="3.4"/><path d="M22 25.5 L35.3 9.8 C36.6 8.3 38.8 9.3 37.8 11 L25.6 28.2 Z" fill="#fff" stroke="#333" stroke-width="1.25" stroke-linejoin="round"/><path d="M9.6 30.8 C12.8 31 14.8 29.2 16.8 27.2 C18.4 25.6 21 25 23.2 26.6 L25.4 28.6 C25.2 32 22.2 34.2 17.2 34.2 C14 34.2 11.5 32.8 9.6 30.8 Z" fill="#8cc4f5" stroke="#1f64ad" stroke-width="1.3" stroke-linejoin="round"/></svg>
<div class="t" style="left:1203.00px;top:129.79px;font-size:14.6px;color:#3b3a39;transform:scaleX(0.9540);transform-origin:0 0;">Cell</div>
<div class="t" style="left:1189.00px;top:149.29px;font-size:14.6px;color:#3b3a39;transform:scaleX(0.9438);transform-origin:0 0;">Styles</div>
<svg class="r" style="left:1231.1px;top:155.0px" width="9.0" height="5.0" viewBox="0 0 9.0 5.0" fill="none"><path d="M0.6 0.6 L4.5 4.3 L8.4 0.6" stroke="#444" stroke-width="1.2"/></svg>
<svg class="r" style="left:1271.5px;top:91px" width="38" height="29" viewBox="0 0 38 29" fill="none"><rect x="0.8" y="0.8" width="34.2" height="26.2" fill="#fff"/><path d="M0.8 0.8 H35 V27 H0.8 Z M0.8 9.5 H35 M0.8 18.3 H35 M12 0.8 V27 M23.5 0.8 V27" stroke="#444" stroke-width="1.4"/><rect x="5" y="9.5" width="30" height="8.8" fill="#8ec0ef" stroke="#2b88d8" stroke-width="1.3"/><path d="M23.5 9.5 V18.3" stroke="#2b88d8" stroke-width="1.3"/><path d="M17 11.5 H8 V6 L-1 13.9 L8 21.8 V16.3 H17 Z" fill="#fff" stroke="#2b88d8" stroke-width="1.3" stroke-linejoin="round"/></svg>
<div class="t" style="left:1272.30px;top:129.49px;font-size:14.6px;color:#3b3a39;transform:scaleX(0.9789);transform-origin:0 0;">Insert</div>
<svg class="r" style="left:1284.8px;top:153.7px" width="9.0" height="5.0" viewBox="0 0 9.0 5.0" fill="none"><path d="M0.6 0.6 L4.5 4.3 L8.4 0.6" stroke="#444" stroke-width="1.2"/></svg>
<svg class="r" style="left:1324.5px;top:91px" width="38" height="29" viewBox="0 0 38 29" fill="none"><rect x="0.8" y="0.8" width="34.2" height="26.2" fill="#fff"/><path d="M0.8 0.8 H35 V27 H0.8 Z M0.8 9.5 H35 M0.8 18.3 H35 M12 0.8 V27 M23.5 0.8 V27" stroke="#444" stroke-width="1.4"/><rect x="5" y="9.5" width="20" height="8.8" fill="#8ec0ef" stroke="#2b88d8" stroke-width="1.3"/><path d="M16 9.5 V18.3" stroke="#2b88d8" stroke-width="1.3"/><path d="M22 7 L36 21 M36 7 L22 21" stroke="#e03a3a" stroke-width="1.4"/></svg>
<div class="t" style="left:1321.00px;top:129.49px;font-size:14.6px;color:#3b3a39;transform:scaleX(1.0078);transform-origin:0 0;">Delete</div>
<svg class="r" style="left:1337.0px;top:153.7px" width="9.0" height="5.0" viewBox="0 0 9.0 5.0" fill="none"><path d="M0.6 0.6 L4.5 4.3 L8.4 0.6" stroke="#444" stroke-width="1.2"/></svg>
<svg class="r" style="left:1376.4px;top:91px" width="36" height="29" viewBox="0 0 36 29" fill="none"><rect x="0.8" y="0.8" width="34.2" height="26.2" fill="#fff"/><path d="M0.8 0.8 H35 V27 H0.8 Z M0.8 9.5 H35 M0.8 18.3 H35 M9.5 0.8 V27 M26 0.8 V27" stroke="#444" stroke-width="1.4"/><rect x="9.5" y="9.5" width="16.5" height="8.8" fill="#8ec0ef" stroke="#2b88d8" stroke-width="1.3"/><path d="M7.5 -4.5 H28 M7.5 -6.5 V-2.5 M28 -6.5 V-2.5" stroke="#2b88d8" stroke-width="1.3"/></svg>
<div class="t" style="left:1370.80px;top:129.49px;font-size:14.6px;color:#3b3a39;transform:scaleX(0.9891);transform-origin:0 0;">Format</div>
<svg class="r" style="left:1388.8px;top:153.7px" width="9.0" height="5.0" viewBox="0 0 9.0 5.0" fill="none"><path d="M0.6 0.6 L4.5 4.3 L8.4 0.6" stroke="#444" stroke-width="1.2"/></svg>
<svg class="r" style="left:1446px;top:86px" width="16" height="18" viewBox="0 0 16 18" fill="none"><path d="M15.5 2.5 V1 H1 L8 9 L1 17 H15.5 V15.5" stroke="#444" stroke-width="1.4"/></svg>
<div class="t" style="left:1468.40px;top:87.79px;font-size:14.6px;color:#3b3a39;">AutoSum</div>
<svg class="r" style="left:1541.8px;top:93.1px" width="9.0" height="5.0" viewBox="0 0 9.0 5.0" fill="none"><path d="M0.6 0.6 L4.5 4.3 L8.4 0.6" stroke="#444" stroke-width="1.2"/></svg>
<svg class="r" style="left:1444px;top:115px" width="20" height="18" viewBox="0 0 20 18" fill="none"><rect x="0.8" y="0.8" width="18.4" height="16.4" fill="#fff" stroke="#444" stroke-width="1.4"/><path d="M0.8 3.3 H19.2" stroke="#444" stroke-width="1.4"/><path d="M10 6 V14 M7 11 L10 14 L13 11" stroke="#2b88d8" stroke-width="1.3"/></svg>
<div class="t" style="left:1468.40px;top:116.59px;font-size:14.6px;color:#3b3a39;transform:scaleX(0.9854);transform-origin:0 0;">Fill</div>
<svg class="r" style="left:1490.8px;top:120.9px" width="9.0" height="5.0" viewBox="0 0 9.0 5.0" fill="none"><path d="M0.6 0.6 L4.5 4.3 L8.4 0.6" stroke="#444" stroke-width="1.2"/></svg>
<svg class="r" style="left:1444px;top:143px" width="20" height="20" viewBox="0 0 20 20" fill="none"><path d="M1 13 L12.5 1.5 L19 8 L7.5 19.5 Z" fill="#fff" stroke="#a24ac0" stroke-width="1.4" stroke-linejoin="round"/><path d="M1 13 L5 9 L11.5 15.5 L7.5 19.5 Z" fill="#d6a5ea" stroke="#a24ac0" stroke-width="1.3"/></svg>
<div class="t" style="left:1468.40px;top:145.29px;font-size:14.6px;color:#3b3a39;transform:scaleX(0.9548);transform-origin:0 0;">Clear</div>
<svg class="r" style="left:1505.8px;top:150.1px" width="9.0" height="5.0" viewBox="0 0 9.0 5.0" fill="none"><path d="M0.6 0.6 L4.5 4.3 L8.4 0.6" stroke="#444" stroke-width="1.2"/></svg>
<svg class="r" style="left:1566px;top:88px" width="37" height="34" viewBox="0 0 37 34" fill="none"><path d="M0.8 15.8 L6.5 0.6 L12.2 15.8 M2.8 10.8 H10.2" stroke="#2b88d8" stroke-width="1.4"/><path d="M1.5 19 H11.5 L1.2 32.3 H12" stroke="#444" stroke-width="1.4"/><path d="M16 8.5 H35 V11 L27.5 19 V28 H23.5 V19 L16 11 Z" fill="#fff" stroke="#444" stroke-width="1.3" stroke-linejoin="round"/></svg>
<div class="t" style="left:1562.00px;top:129.49px;font-size:14.6px;color:#3b3a39;transform:scaleX(1.0609);transform-origin:0 0;">Sort &amp;</div>
<div class="t" style="left:1560.80px;top:149.39px;font-size:14.6px;color:#3b3a39;transform:scaleX(0.9865);transform-origin:0 0;">Filter</div>
<svg class="r" style="left:1597.0px;top:155.0px" width="9.0" height="5.0" viewBox="0 0 9.0 5.0" fill="none"><path d="M0.6 0.6 L4.5 4.3 L8.4 0.6" stroke="#444" stroke-width="1.2"/></svg>
<svg class="r" style="left:1619px;top:86px" width="38" height="39" viewBox="0 0 38 39" fill="none"><circle cx="24.3" cy="14.4" r="12.7" fill="#fff" stroke="#444" stroke-width="1.4"/><path d="M15.5 23.5 L1.5 37.5" stroke="#444" stroke-width="1.4"/></svg>
<div class="t" style="left:1617.50px;top:129.49px;font-size:14.6px;color:#3b3a39;transform:scaleX(1.0196);transform-origin:0 0;">Find &amp;</div>
<div class="t" style="left:1612.40px;top:149.39px;font-size:14.6px;color:#3b3a39;transform:scaleX(0.9692);transform-origin:0 0;">Select</div>
<svg class="r" style="left:1656.5px;top:155.0px" width="9.0" height="5.0" viewBox="0 0 9.0 5.0" fill="none"><path d="M0.6 0.6 L4.5 4.3 L8.4 0.6" stroke="#444" stroke-width="1.2"/></svg>
<svg class="r" style="left:1701px;top:87px" width="29" height="37" viewBox="0 0 29 37" fill="none"><path d="M14.4 0.8 H24.5 L16 15.7 H27.3 L7.6 35.4 H2.5 L11.3 21.1 H0.6 Z" fill="#8cc4f5" stroke="#1f64ad" stroke-width="1.4" stroke-linejoin="round"/></svg>
<div class="t" style="left:1697.70px;top:129.79px;font-size:14.6px;color:#3b3a39;transform:scaleX(0.9503);transform-origin:0 0;">Ideas</div>
<svg class="r" style="left:1782px;top:85px" width="35" height="38" viewBox="0 0 35 38" fill="none"><path d="M0.8 3.5 H12 M24 21 V36.5 H0.8 V3.5" stroke="#c8c6c4" stroke-width="1.6"/><rect x="1.6" y="4.3" width="21.6" height="31.4" fill="#ececec"/><path d="M5 17 L10 12 L20 22 L15 27 Z" stroke="#bdbdbd" stroke-width="1.6"/><path d="M7.5 17.5 L10 15 L17.5 22.5 L15 25 Z" fill="#d0d0d0"/><path d="M15 11 L22 4 L28 10 L21 17 Z" fill="#f3f2f1" stroke="#bdbdbd" stroke-width="1.6"/><path d="M22 4 L26 0.8 L33.5 7 L28 10" stroke="#bdbdbd" stroke-width="1.6"/></svg>
<div class="t" style="left:1763.40px;top:129.79px;font-size:14.6px;color:#a19f9d;">Sensitivity</div>
<svg class="r" style="left:1790.7px;top:153.5px" width="9.0" height="5.0" viewBox="0 0 9.0 5.0" fill="none"><path d="M0.6 0.6 L4.5 4.3 L8.4 0.6" stroke="#a19f9d" stroke-width="1.2"/></svg>
<svg class="r" style="left:1894px;top:185px" width="13" height="7" viewBox="0 0 13 7" fill="none"><path d="M0.7 6.3 L6.5 0.8 L12.3 6.3" stroke="#444" stroke-width="1.3"/></svg>
<div class="r" style="left:0px;top:206px;width:1915px;height:46px;background:#e6e6e6"></div>
<div class="r" style="left:3px;top:210px;width:127px;height:30px;background:#fff;border:1px solid #c6c6c6;box-sizing:border-box"></div>
<div class="t" style="left:10.50px;top:217.47px;font-size:15.5px;color:#222;transform:scaleX(1.0611);transform-origin:0 0;">M27</div>
<svg class="r" style="left:114px;top:222px" width="9" height="5" viewBox="0 0 9 5" fill="none"><path d="M0 0 H9 L4.5 5 Z" fill="#666"/></svg>
<div class="r" style="left:147px;top:218px;width:3px;height:3px;background:#9e9e9e"></div>
<div class="r" style="left:147px;top:223px;width:3px;height:3px;background:#9e9e9e"></div>
<div class="r" style="left:147px;top:228px;width:3px;height:3px;background:#9e9e9e"></div>
<div class="r" style="left:167px;top:210px;width:137px;height:30px;background:#fff;border:1px solid #c6c6c6;box-sizing:border-box"></div>
<svg class="r" style="left:183px;top:218px" width="14" height="13" viewBox="0 0 14 13" fill="none"><path d="M1 1.5 L13.5 12.5 M13 1 L1 12.5" stroke="#b4b4b4" stroke-width="1.8"/></svg>
<svg class="r" style="left:227px;top:219px" width="16" height="13" viewBox="0 0 16 13" fill="none"><path d="M1 7 L5.5 12 L15 1.5" stroke="#b4b4b4" stroke-width="2.6"/></svg>
<div class="t" style="left:270.00px;top:212.40px;font-size:20px;color:#505050;transform:scaleX(1.0924);transform-origin:0 0;font-family:Liberation Serif,serif;font-style:italic;-webkit-text-stroke:0.4px #505050;">fx</div>
<div class="r" style="left:307px;top:210px;width:1604px;height:30px;background:#fff;border:1px solid #c6c6c6;box-sizing:border-box"></div>
<svg class="r" style="left:1895.5px;top:222px" width="10" height="6" viewBox="0 0 10 6" fill="none"><path d="M1 1 L5 5 L9 1" stroke="#666" stroke-width="1.8"/></svg>
<div class="r" style="left:0px;top:252px;width:1894px;height:23px;background:#e6e6e6"></div>
<div class="r" style="left:1894px;top:252px;width:21px;height:719px;background:#e6e6e6"></div>
<div class="r" style="left:0px;top:275px;width:31px;height:696px;background:#e6e6e6"></div>
<div class="r" style="left:31px;top:276px;width:1860px;height:695px;background:#fff"></div>
<div class="r" style="left:1378px;top:252px;width:97px;height:23px;background:#d2d2d2"></div>
<div class="r" style="left:0px;top:900px;width:30px;height:23px;background:#d2d2d2"></div>
<svg class="r" style="left:0;top:0" width="1915" height="1023"><rect x="31" y="299" width="1860" height="1" fill="#d9d9d9"/><rect x="0" y="299" width="30" height="1" fill="#bfbfbf"/><rect x="31" y="323" width="1860" height="1" fill="#d9d9d9"/><rect x="0" y="323" width="30" height="1" fill="#bfbfbf"/><rect x="31" y="347" width="1860" height="1" fill="#d9d9d9"/><rect x="0" y="347" width="30" height="1" fill="#bfbfbf"/><rect x="31" y="371" width="1860" height="1" fill="#d9d9d9"/><rect x="0" y="371" width="30" height="1" fill="#bfbfbf"/><rect x="31" y="395" width="1860" height="1" fill="#d9d9d9"/><rect x="0" y="395" width="30" height="1" fill="#bfbfbf"/><rect x="31" y="419" width="1860" height="1" fill="#d9d9d9"/><rect x="0" y="419" width="30" height="1" fill="#bfbfbf"/><rect x="31" y="443" width="1860" height="1" fill="#d9d9d9"/><rect x="0" y="443" width="30" height="1" fill="#bfbfbf"/><rect x="31" y="467" width="1860" height="1" fill="#d9d9d9"/><rect x="0" y="467" width="30" height="1" fill="#bfbfbf"/><rect x="31" y="491" width="1860" height="1" fill="#d9d9d9"/><rect x="0" y="491" width="30" height="1" fill="#bfbfbf"/><rect x="31" y="515" width="1860" height="1" fill="#d9d9d9"/><rect x="0" y="515" width="30" height="1" fill="#bfbfbf"/><rect x="31" y="539" width="1860" height="1" fill="#d9d9d9"/><rect x="0" y="539" width="30" height="1" fill="#bfbfbf"/><rect x="31" y="563" width="1860" height="1" fill="#d9d9d9"/><rect x="0" y="563" width="30" height="1" fill="#bfbfbf"/><rect x="31" y="587" width="1860" height="1" fill="#d9d9d9"/><rect x="0" y="587" width="30" height="1" fill="#bfbfbf"/><rect x="31" y="611" width="1860" height="1" fill="#d9d9d9"/><rect x="0" y="611" width="30" height="1" fill="#bfbfbf"/><rect x="31" y="635" width="1860" height="1" fill="#d9d9d9"/><rect x="0" y="635" width="30" height="1" fill="#bfbfbf"/><rect x="31" y="659" width="1860" height="1" fill="#d9d9d9"/><rect x="0" y="659" width="30" height="1" fill="#bfbfbf"/><rect x="31" y="683" width="1860" height="1" fill="#d9d9d9"/><rect x="0" y="683" width="30" height="1" fill="#bfbfbf"/><rect x="31" y="707" width="1860" height="1" fill="#d9d9d9"/><rect x="0" y="707" width="30" height="1" fill="#bfbfbf"/><rect x="31" y="731" width="1860" height="1" fill="#d9d9d9"/><rect x="0" y="731" width="30" height="1" fill="#bfbfbf"/><rect x="31" y="755" width="1860" height="1" fill="#d9d9d9"/><rect x="0" y="755" width="30" height="1" fill="#bfbfbf"/><rect x="31" y="779" width="1860" height="1" fill="#d9d9d9"/><rect x="0" y="779" width="30" height="1" fill="#bfbfbf"/><rect x="31" y="803" width="1860" height="1" fill="#d9d9d9"/><rect x="0" y="803" width="30" height="1" fill="#bfbfbf"/><rect x="31" y="827" width="1860" height="1" fill="#d9d9d9"/><rect x="0" y="827" width="30" height="1" fill="#bfbfbf"/><rect x="31" y="851" width="1860" height="1" fill="#d9d9d9"/><rect x="0" y="851" width="30" height="1" fill="#bfbfbf"/><rect x="31" y="875" width="1860" height="1" fill="#d9d9d9"/><rect x="0" y="875" width="30" height="1" fill="#bfbfbf"/><rect x="31" y="899" width="1860" height="1" fill="#d9d9d9"/><rect x="0" y="899" width="30" height="1" fill="#bfbfbf"/><rect x="31" y="923" width="1860" height="1" fill="#d9d9d9"/><rect x="0" y="923" width="30" height="1" fill="#bfbfbf"/><rect x="31" y="947" width="1860" height="1" fill="#d9d9d9"/><rect x="0" y="947" width="30" height="1" fill="#bfbfbf"/><rect x="331" y="276" width="1" height="695" fill="#d9d9d9"/><rect x="581" y="276" width="1" height="695" fill="#d9d9d9"/><rect x="659" y="276" width="1" height="695" fill="#d9d9d9"/><rect x="781" y="276" width="1" height="695" fill="#d9d9d9"/><rect x="887" y="276" width="1" height="384" fill="#d9d9d9"/><rect x="887" y="683" width="1" height="288" fill="#d9d9d9"/><rect x="985" y="276" width="1" height="384" fill="#d9d9d9"/><rect x="985" y="683" width="1" height="288" fill="#d9d9d9"/><rect x="1083" y="276" width="1" height="695" fill="#d9d9d9"/><rect x="1181" y="276" width="1" height="695" fill="#d9d9d9"/><rect x="1279" y="276" width="1" height="695" fill="#d9d9d9"/><rect x="1377" y="276" width="1" height="695" fill="#d9d9d9"/><rect x="1475" y="276" width="1" height="695" fill="#d9d9d9"/><rect x="1573" y="276" width="1" height="695" fill="#d9d9d9"/><rect x="1671" y="276" width="1" height="695" fill="#d9d9d9"/><rect x="1778" y="276" width="1" height="695" fill="#d9d9d9"/><rect x="331" y="252" width="1" height="23" fill="#bdbdbd"/><rect x="579" y="252" width="1" height="23" fill="#a6a6a6"/><rect x="583" y="252" width="1" height="23" fill="#a6a6a6"/><rect x="657" y="252" width="1" height="23" fill="#a6a6a6"/><rect x="661" y="252" width="1" height="23" fill="#a6a6a6"/><rect x="781" y="252" width="1" height="23" fill="#bdbdbd"/><rect x="887" y="252" width="1" height="23" fill="#bdbdbd"/><rect x="985" y="252" width="1" height="23" fill="#bdbdbd"/><rect x="1083" y="252" width="1" height="23" fill="#bdbdbd"/><rect x="1181" y="252" width="1" height="23" fill="#bdbdbd"/><rect x="1279" y="252" width="1" height="23" fill="#bdbdbd"/><rect x="1377" y="252" width="1" height="23" fill="#bdbdbd"/><rect x="1475" y="252" width="1" height="23" fill="#bdbdbd"/><rect x="1573" y="252" width="1" height="23" fill="#bdbdbd"/><rect x="1669" y="252" width="1" height="23" fill="#a6a6a6"/><rect x="1673" y="252" width="1" height="23" fill="#a6a6a6"/><rect x="1778" y="252" width="1" height="23" fill="#bdbdbd"/><rect x="30" y="252" width="1" height="719" fill="#9e9e9e"/><rect x="0" y="275" width="1892" height="1" fill="#9e9e9e"/><rect x="1891" y="275" width="1" height="696" fill="#9e9e9e"/><rect x="0" y="971" width="1892" height="1" fill="#9e9e9e"/><rect x="1377" y="274" width="99" height="2" fill="#217346"/><rect x="29" y="899" width="2" height="25" fill="#217346"/><polygon points="27,256 27,272 11,272" fill="#b4b4b4"/></svg>
<div class="t" style="left:175.66px;top:255.52px;font-size:16px;color:#222;">A</div>
<div class="t" style="left:451.16px;top:255.52px;font-size:16px;color:#222;">B</div>
<div class="t" style="left:614.72px;top:255.52px;font-size:16px;color:#222;">D</div>
<div class="t" style="left:715.61px;top:255.52px;font-size:16px;color:#222;">F</div>
<div class="t" style="left:828.27px;top:255.52px;font-size:16px;color:#222;">G</div>
<div class="t" style="left:930.72px;top:255.52px;font-size:16px;color:#222;">H</div>
<div class="t" style="left:1032.27px;top:255.52px;font-size:16px;color:#222;">I</div>
<div class="t" style="left:1128.50px;top:255.52px;font-size:16px;color:#222;">J</div>
<div class="t" style="left:1225.16px;top:255.52px;font-size:16px;color:#222;">K</div>
<div class="t" style="left:1324.05px;top:255.52px;font-size:16px;color:#222;">L</div>
<div class="t" style="left:1419.84px;top:255.52px;font-size:16px;color:#217346;">M</div>
<div class="t" style="left:1518.72px;top:255.52px;font-size:16px;color:#222;">N</div>
<div class="t" style="left:1616.27px;top:255.52px;font-size:16px;color:#222;">O</div>
<div class="t" style="left:1718.77px;top:255.52px;font-size:16px;color:#222;">Q</div>
<div class="t" style="left:1847.22px;top:255.52px;font-size:16px;color:#222;">R</div>
<div class="t" style="left:9.77px;top:278.62px;font-size:17px;color:#222;">1</div>
<div class="t" style="left:9.77px;top:302.62px;font-size:17px;color:#222;">2</div>
<div class="t" style="left:9.77px;top:326.62px;font-size:17px;color:#222;">3</div>
<div class="t" style="left:9.77px;top:350.62px;font-size:17px;color:#222;">4</div>
<div class="t" style="left:9.77px;top:374.62px;font-size:17px;color:#222;">5</div>
<div class="t" style="left:9.77px;top:398.62px;font-size:17px;color:#222;">6</div>
<div class="t" style="left:9.77px;top:422.62px;font-size:17px;color:#222;">7</div>
<div class="t" style="left:9.77px;top:446.62px;font-size:17px;color:#222;">8</div>
<div class="t" style="left:9.77px;top:470.62px;font-size:17px;color:#222;">9</div>
<div class="t" style="left:5.05px;top:494.62px;font-size:17px;color:#222;">10</div>
<div class="t" style="left:5.68px;top:518.62px;font-size:17px;color:#222;">11</div>
<div class="t" style="left:5.05px;top:542.62px;font-size:17px;color:#222;">12</div>
<div class="t" style="left:5.05px;top:566.62px;font-size:17px;color:#222;">13</div>
<div class="t" style="left:5.05px;top:590.62px;font-size:17px;color:#222;">14</div>
<div class="t" style="left:5.05px;top:614.62px;font-size:17px;color:#222;">15</div>
<div class="t" style="left:5.05px;top:638.62px;font-size:17px;color:#222;">16</div>
<div class="t" style="left:5.05px;top:662.62px;font-size:17px;color:#222;">17</div>
<div class="t" style="left:5.05px;top:686.62px;font-size:17px;color:#222;">18</div>
<div class="t" style="left:5.05px;top:710.62px;font-size:17px;color:#222;">19</div>
<div class="t" style="left:5.05px;top:734.62px;font-size:17px;color:#222;">20</div>
<div class="t" style="left:5.05px;top:758.62px;font-size:17px;color:#222;">21</div>
<div class="t" style="left:5.05px;top:782.62px;font-size:17px;color:#222;">22</div>
<div class="t" style="left:5.05px;top:806.62px;font-size:17px;color:#222;">23</div>
<div class="t" style="left:5.05px;top:830.62px;font-size:17px;color:#222;">24</div>
<div class="t" style="left:5.05px;top:854.62px;font-size:17px;color:#222;">25</div>
<div class="t" style="left:5.05px;top:878.62px;font-size:17px;color:#222;">26</div>
<div class="t" style="left:5.05px;top:902.62px;font-size:17px;color:#217346;">27</div>
<div class="t" style="left:5.05px;top:926.62px;font-size:17px;color:#222;">28</div>
<div class="t" style="left:5.05px;top:950.62px;font-size:17px;color:#222;">29</div>
<div class="r" style="left:31px;top:275px;width:300px;height:23px;overflow:hidden"><div class="t" style="left:3.00px;top:4.52px;font-size:16px;color:#000;transform:scaleX(1.015);transform-origin:0 0">run_id</div></div>
<div class="r" style="left:332px;top:275px;width:249px;height:23px;overflow:hidden"><div class="t" style="left:3.00px;top:4.52px;font-size:16px;color:#000;transform:scaleX(1.015);transform-origin:0 0">tags.mlflow.runName</div></div>
<div class="r" style="left:582px;top:275px;width:77px;height:23px;overflow:hidden"><div class="t" style="left:3.00px;top:4.52px;font-size:16px;color:#000;transform:scaleX(1.015);transform-origin:0 0">status</div></div>
<div class="r" style="left:660px;top:275px;width:121px;height:23px;overflow:hidden"><div class="t" style="left:3.00px;top:4.52px;font-size:16px;color:#000;transform:scaleX(1.015);transform-origin:0 0">start_time</div></div>
<div class="r" style="left:782px;top:275px;width:105px;height:23px;overflow:hidden"><div class="t" style="left:3.00px;top:4.52px;font-size:16px;color:#000;transform:scaleX(1.015);transform-origin:0 0">end_time</div></div>
<div class="r" style="left:888px;top:275px;width:97px;height:23px;overflow:hidden"><div class="t" style="left:3.00px;top:4.52px;font-size:16px;color:#000;transform:scaleX(1.015);transform-origin:0 0">metrics.Kappa</div></div>
<div class="r" style="left:986px;top:275px;width:97px;height:23px;overflow:hidden"><div class="t" style="left:3.00px;top:4.52px;font-size:16px;color:#000;transform:scaleX(1.015);transform-origin:0 0">metrics.Accuracy</div></div>
<div class="r" style="left:1084px;top:275px;width:97px;height:23px;overflow:hidden"><div class="t" style="left:3.00px;top:4.52px;font-size:16px;color:#000;transform:scaleX(1.015);transform-origin:0 0">metrics.AUC</div></div>
<div class="r" style="left:1182px;top:275px;width:97px;height:23px;overflow:hidden"><div class="t" style="left:3.00px;top:4.52px;font-size:16px;color:#000;transform:scaleX(1.015);transform-origin:0 0">metrics.MCC</div></div>
<div class="r" style="left:1280px;top:275px;width:97px;height:23px;overflow:hidden"><div class="t" style="left:3.00px;top:4.52px;font-size:16px;color:#000;transform:scaleX(1.015);transform-origin:0 0">metrics.Recall</div></div>
<div class="r" style="left:1378px;top:275px;width:97px;height:23px;overflow:hidden"><div class="t" style="left:3.00px;top:4.52px;font-size:16px;color:#000;transform:scaleX(1.015);transform-origin:0 0">metrics.TT</div></div>
<div class="r" style="left:1476px;top:275px;width:97px;height:23px;overflow:hidden"><div class="t" style="left:3.00px;top:4.52px;font-size:16px;color:#000;transform:scaleX(1.015);transform-origin:0 0">metrics.F1</div></div>
<div class="r" style="left:1574px;top:275px;width:97px;height:23px;overflow:hidden"><div class="t" style="left:3.00px;top:4.52px;font-size:16px;color:#000;transform:scaleX(1.015);transform-origin:0 0">metrics.Precision</div></div>
<div class="r" style="left:1672px;top:275px;width:106px;height:23px;overflow:hidden"><div class="t" style="left:3.00px;top:4.52px;font-size:16px;color:#000;transform:scaleX(1.015);transform-origin:0 0">params.silent</div></div>
<div class="r" style="left:1779px;top:275px;width:112px;height:23px;overflow:hidden"><div class="t" style="left:3.00px;top:4.52px;font-size:16px;color:#000;transform:scaleX(1.015);transform-origin:0 0">params.max_depth</div></div>
<div class="r" style="left:31px;top:299px;width:300px;height:23px;overflow:hidden"><div class="t" style="left:3.00px;top:4.52px;font-size:16px;color:#000;transform:scaleX(1.015);transform-origin:0 0">48c20abfb0e246d7bc4ab501d70159a3</div></div>
<div class="r" style="left:332px;top:299px;width:249px;height:23px;overflow:hidden"><div class="t" style="left:3.00px;top:4.52px;font-size:16px;color:#000;transform:scaleX(1.015);transform-origin:0 0">CatBoost Classifier</div></div>
<div class="r" style="left:582px;top:299px;width:77px;height:23px;overflow:hidden"><div class="t" style="left:3.00px;top:5.06px;font-size:15.4px;color:#000;transform:scaleX(0.965);transform-origin:0 0">FINISHED</div></div>
<div class="r" style="left:660px;top:299px;width:121px;height:23px;overflow:hidden"><div class="t" style="left:3.00px;top:4.52px;font-size:16px;color:#000;transform:scaleX(1.015);transform-origin:0 0">2020-08-05 18:12:09.245000+00:00</div></div>
<div class="r" style="left:782px;top:299px;width:105px;height:23px;overflow:hidden"><div class="t" style="left:3.00px;top:4.52px;font-size:16px;color:#000;transform:scaleX(1.015);transform-origin:0 0">2020-08-05 18:12:09.245000+00:00</div></div>
<div class="t" style="left:925.73px;top:303.52px;font-size:16px;color:#000;transform:scaleX(1.0100);transform-origin:0 0;">0.5878</div>
<div class="t" style="left:1023.73px;top:303.52px;font-size:16px;color:#000;transform:scaleX(1.0100);transform-origin:0 0;">0.8049</div>
<div class="t" style="left:1121.73px;top:303.52px;font-size:16px;color:#000;transform:scaleX(1.0100);transform-origin:0 0;">0.8932</div>
<div class="t" style="left:1219.73px;top:303.52px;font-size:16px;color:#000;transform:scaleX(1.0100);transform-origin:0 0;">0.5899</div>
<div class="t" style="left:1317.73px;top:303.52px;font-size:16px;color:#000;transform:scaleX(1.0100);transform-origin:0 0;">0.7326</div>
<div class="t" style="left:1415.73px;top:303.52px;font-size:16px;color:#000;transform:scaleX(1.0100);transform-origin:0 0;">1.0688</div>
<div class="t" style="left:1513.73px;top:303.52px;font-size:16px;color:#000;transform:scaleX(1.0100);transform-origin:0 0;">0.7457</div>
<div class="t" style="left:1611.73px;top:303.52px;font-size:16px;color:#000;transform:scaleX(1.0100);transform-origin:0 0;">0.7629</div>
<div class="t" style="left:1705.75px;top:304.06px;font-size:15.4px;color:#000;transform:scaleX(0.9191);transform-origin:0 0;">TRUE</div>
<div class="r" style="left:31px;top:323px;width:300px;height:23px;overflow:hidden"><div class="t" style="left:3.00px;top:4.52px;font-size:16px;color:#000;transform:scaleX(1.015);transform-origin:0 0">38a2bf305cb84b67af9844dd5feae71b</div></div>
<div class="r" style="left:332px;top:323px;width:249px;height:23px;overflow:hidden"><div class="t" style="left:3.00px;top:4.52px;font-size:16px;color:#000;transform:scaleX(1.015);transform-origin:0 0">Light Gradient Boosting Machine</div></div>
<div class="r" style="left:582px;top:323px;width:77px;height:23px;overflow:hidden"><div class="t" style="left:3.00px;top:5.06px;font-size:15.4px;color:#000;transform:scaleX(0.965);transform-origin:0 0">FINISHED</div></div>
<div class="r" style="left:660px;top:323px;width:121px;height:23px;overflow:hidden"><div class="t" style="left:3.00px;top:4.52px;font-size:16px;color:#000;transform:scaleX(1.015);transform-origin:0 0">2020-08-05 18:12:09.245000+00:00</div></div>
<div class="r" style="left:782px;top:323px;width:105px;height:23px;overflow:hidden"><div class="t" style="left:3.00px;top:4.52px;font-size:16px;color:#000;transform:scaleX(1.015);transform-origin:0 0">2020-08-05 18:12:09.245000+00:00</div></div>
<div class="t" style="left:925.73px;top:327.52px;font-size:16px;color:#000;transform:scaleX(1.0100);transform-origin:0 0;">0.5471</div>
<div class="t" style="left:1023.73px;top:327.52px;font-size:16px;color:#000;transform:scaleX(1.0100);transform-origin:0 0;">0.7861</div>
<div class="t" style="left:1121.73px;top:327.52px;font-size:16px;color:#000;transform:scaleX(1.0100);transform-origin:0 0;">0.8806</div>
<div class="t" style="left:1219.73px;top:327.52px;font-size:16px;color:#000;transform:scaleX(1.0100);transform-origin:0 0;">0.5497</div>
<div class="t" style="left:1317.73px;top:327.52px;font-size:16px;color:#000;transform:scaleX(1.0100);transform-origin:0 0;">0.7053</div>
<div class="t" style="left:1415.73px;top:327.52px;font-size:16px;color:#000;transform:scaleX(1.0100);transform-origin:0 0;">0.0631</div>
<div class="t" style="left:1513.73px;top:327.52px;font-size:16px;color:#000;transform:scaleX(1.0100);transform-origin:0 0;">0.7195</div>
<div class="t" style="left:1611.73px;top:327.52px;font-size:16px;color:#000;transform:scaleX(1.0100);transform-origin:0 0;">0.7393</div>
<div class="t" style="left:1705.75px;top:328.06px;font-size:15.4px;color:#000;transform:scaleX(0.9191);transform-origin:0 0;">TRUE</div>
<div class="r" style="left:31px;top:347px;width:300px;height:23px;overflow:hidden"><div class="t" style="left:3.00px;top:4.52px;font-size:16px;color:#000;transform:scaleX(1.015);transform-origin:0 0">6fca9711c41041b194f2cd2b685ae89f</div></div>
<div class="r" style="left:332px;top:347px;width:249px;height:23px;overflow:hidden"><div class="t" style="left:3.00px;top:4.52px;font-size:16px;color:#000;transform:scaleX(1.015);transform-origin:0 0">Extreme Gradient Boosting</div></div>
<div class="r" style="left:582px;top:347px;width:77px;height:23px;overflow:hidden"><div class="t" style="left:3.00px;top:5.06px;font-size:15.4px;color:#000;transform:scaleX(0.965);transform-origin:0 0">FINISHED</div></div>
<div class="r" style="left:660px;top:347px;width:121px;height:23px;overflow:hidden"><div class="t" style="left:3.00px;top:4.52px;font-size:16px;color:#000;transform:scaleX(1.015);transform-origin:0 0">2020-08-05 18:12:09.245000+00:00</div></div>
<div class="r" style="left:782px;top:347px;width:105px;height:23px;overflow:hidden"><div class="t" style="left:3.00px;top:4.52px;font-size:16px;color:#000;transform:scaleX(1.015);transform-origin:0 0">2020-08-05 18:12:09.245000+00:00</div></div>
<div class="t" style="left:925.73px;top:351.52px;font-size:16px;color:#000;transform:scaleX(1.0100);transform-origin:0 0;">0.5609</div>
<div class="t" style="left:1023.73px;top:351.52px;font-size:16px;color:#000;transform:scaleX(1.0100);transform-origin:0 0;">0.7914</div>
<div class="t" style="left:1121.73px;top:351.52px;font-size:16px;color:#000;transform:scaleX(1.0100);transform-origin:0 0;">0.8716</div>
<div class="t" style="left:1219.73px;top:351.52px;font-size:16px;color:#000;transform:scaleX(1.0100);transform-origin:0 0;">0.5633</div>
<div class="t" style="left:1317.73px;top:351.52px;font-size:16px;color:#000;transform:scaleX(1.0100);transform-origin:0 0;">0.7294</div>
<div class="t" style="left:1415.73px;top:351.52px;font-size:16px;color:#000;transform:scaleX(1.0100);transform-origin:0 0;">0.1056</div>
<div class="t" style="left:1513.73px;top:351.52px;font-size:16px;color:#000;transform:scaleX(1.0100);transform-origin:0 0;">0.7309</div>
<div class="t" style="left:1611.73px;top:351.52px;font-size:16px;color:#000;transform:scaleX(1.0100);transform-origin:0 0;">0.7367</div>
<div class="r" style="left:31px;top:371px;width:300px;height:23px;overflow:hidden"><div class="t" style="left:3.00px;top:4.52px;font-size:16px;color:#000;transform:scaleX(1.015);transform-origin:0 0">78fee9f6d275431c913a68a70dce112c</div></div>
<div class="r" style="left:332px;top:371px;width:249px;height:23px;overflow:hidden"><div class="t" style="left:3.00px;top:4.52px;font-size:16px;color:#000;transform:scaleX(1.015);transform-origin:0 0">Extra Trees Classifier</div></div>
<div class="r" style="left:582px;top:371px;width:77px;height:23px;overflow:hidden"><div class="t" style="left:3.00px;top:5.06px;font-size:15.4px;color:#000;transform:scaleX(0.965);transform-origin:0 0">FINISHED</div></div>
<div class="r" style="left:660px;top:371px;width:121px;height:23px;overflow:hidden"><div class="t" style="left:3.00px;top:4.52px;font-size:16px;color:#000;transform:scaleX(1.015);transform-origin:0 0">2020-08-05 18:12:09.245000+00:00</div></div>
<div class="r" style="left:782px;top:371px;width:105px;height:23px;overflow:hidden"><div class="t" style="left:3.00px;top:4.52px;font-size:16px;color:#000;transform:scaleX(1.015);transform-origin:0 0">2020-08-05 18:12:09.245000+00:00</div></div>
<div class="t" style="left:925.73px;top:375.52px;font-size:16px;color:#000;transform:scaleX(1.0100);transform-origin:0 0;">0.4605</div>
<div class="t" style="left:1023.73px;top:375.52px;font-size:16px;color:#000;transform:scaleX(1.0100);transform-origin:0 0;">0.7433</div>
<div class="t" style="left:1121.73px;top:375.52px;font-size:16px;color:#000;transform:scaleX(1.0100);transform-origin:0 0;">0.8205</div>
<div class="t" style="left:1219.73px;top:375.52px;font-size:16px;color:#000;transform:scaleX(1.0100);transform-origin:0 0;">0.4638</div>
<div class="t" style="left:1317.73px;top:375.52px;font-size:16px;color:#000;transform:scaleX(1.0100);transform-origin:0 0;">0.6708</div>
<div class="t" style="left:1415.73px;top:375.52px;font-size:16px;color:#000;transform:scaleX(1.0100);transform-origin:0 0;">0.2472</div>
<div class="t" style="left:1513.73px;top:375.52px;font-size:16px;color:#000;transform:scaleX(1.0100);transform-origin:0 0;">0.6698</div>
<div class="t" style="left:1611.73px;top:375.52px;font-size:16px;color:#000;transform:scaleX(1.0100);transform-origin:0 0;">0.6758</div>
<div class="t" style="left:1782.00px;top:375.52px;font-size:16px;color:#000;">None</div>
<div class="r" style="left:31px;top:395px;width:300px;height:23px;overflow:hidden"><div class="t" style="left:3.00px;top:4.52px;font-size:16px;color:#000;transform:scaleX(1.015);transform-origin:0 0">b60dbdd1d3704c6398da75bb1a27c6f1</div></div>
<div class="r" style="left:332px;top:395px;width:249px;height:23px;overflow:hidden"><div class="t" style="left:3.00px;top:4.52px;font-size:16px;color:#000;transform:scaleX(1.015);transform-origin:0 0">Linear Discriminant Analysis</div></div>
<div class="r" style="left:582px;top:395px;width:77px;height:23px;overflow:hidden"><div class="t" style="left:3.00px;top:5.06px;font-size:15.4px;color:#000;transform:scaleX(0.965);transform-origin:0 0">FINISHED</div></div>
<div class="r" style="left:660px;top:395px;width:121px;height:23px;overflow:hidden"><div class="t" style="left:3.00px;top:4.52px;font-size:16px;color:#000;transform:scaleX(1.015);transform-origin:0 0">2020-08-05 18:12:09.245000+00:00</div></div>
<div class="r" style="left:782px;top:395px;width:105px;height:23px;overflow:hidden"><div class="t" style="left:3.00px;top:4.52px;font-size:16px;color:#000;transform:scaleX(1.015);transform-origin:0 0">2020-08-05 18:12:09.245000+00:00</div></div>
<div class="t" style="left:925.73px;top:399.52px;font-size:16px;color:#000;transform:scaleX(1.0100);transform-origin:0 0;">0.6317</div>
<div class="t" style="left:1023.73px;top:399.52px;font-size:16px;color:#000;transform:scaleX(1.0100);transform-origin:0 0;">0.8263</div>
<div class="t" style="left:1121.73px;top:399.52px;font-size:16px;color:#000;transform:scaleX(1.0100);transform-origin:0 0;">0.8938</div>
<div class="t" style="left:1219.73px;top:399.52px;font-size:16px;color:#000;transform:scaleX(1.0100);transform-origin:0 0;">0.6342</div>
<div class="t" style="left:1317.73px;top:399.52px;font-size:16px;color:#000;transform:scaleX(1.0100);transform-origin:0 0;">0.7536</div>
<div class="t" style="left:1415.73px;top:399.52px;font-size:16px;color:#000;transform:scaleX(1.0100);transform-origin:0 0;">0.0052</div>
<div class="t" style="left:1513.73px;top:399.52px;font-size:16px;color:#000;transform:scaleX(1.0100);transform-origin:0 0;">0.7713</div>
<div class="t" style="left:1611.73px;top:399.52px;font-size:16px;color:#000;transform:scaleX(1.0100);transform-origin:0 0;">0.7938</div>
<div class="r" style="left:31px;top:419px;width:300px;height:23px;overflow:hidden"><div class="t" style="left:3.00px;top:4.52px;font-size:16px;color:#000;transform:scaleX(1.015);transform-origin:0 0">fd21e07745e6450bac0699f6919fc7ce</div></div>
<div class="r" style="left:332px;top:419px;width:249px;height:23px;overflow:hidden"><div class="t" style="left:3.00px;top:4.52px;font-size:16px;color:#000;transform:scaleX(1.015);transform-origin:0 0">Gradient Boosting Classifier</div></div>
<div class="r" style="left:582px;top:419px;width:77px;height:23px;overflow:hidden"><div class="t" style="left:3.00px;top:5.06px;font-size:15.4px;color:#000;transform:scaleX(0.965);transform-origin:0 0">FINISHED</div></div>
<div class="r" style="left:660px;top:419px;width:121px;height:23px;overflow:hidden"><div class="t" style="left:3.00px;top:4.52px;font-size:16px;color:#000;transform:scaleX(1.015);transform-origin:0 0">2020-08-05 18:12:09.245000+00:00</div></div>
<div class="r" style="left:782px;top:419px;width:105px;height:23px;overflow:hidden"><div class="t" style="left:3.00px;top:4.52px;font-size:16px;color:#000;transform:scaleX(1.015);transform-origin:0 0">2020-08-05 18:12:09.245000+00:00</div></div>
<div class="t" style="left:925.73px;top:423.52px;font-size:16px;color:#000;transform:scaleX(1.0100);transform-origin:0 0;">0.5909</div>
<div class="t" style="left:1023.73px;top:423.52px;font-size:16px;color:#000;transform:scaleX(1.0100);transform-origin:0 0;">0.8062</div>
<div class="t" style="left:1121.73px;top:423.52px;font-size:16px;color:#000;transform:scaleX(1.0100);transform-origin:0 0;">0.8869</div>
<div class="t" style="left:1219.73px;top:423.52px;font-size:16px;color:#000;transform:scaleX(1.0100);transform-origin:0 0;">0.5939</div>
<div class="t" style="left:1317.73px;top:423.52px;font-size:16px;color:#000;transform:scaleX(1.0100);transform-origin:0 0;">0.7363</div>
<div class="t" style="left:1415.73px;top:423.52px;font-size:16px;color:#000;transform:scaleX(1.0100);transform-origin:0 0;">0.1385</div>
<div class="t" style="left:1513.73px;top:423.52px;font-size:16px;color:#000;transform:scaleX(1.0100);transform-origin:0 0;">0.7479</div>
<div class="t" style="left:1611.73px;top:423.52px;font-size:16px;color:#000;transform:scaleX(1.0100);transform-origin:0 0;">0.7651</div>
<div class="r" style="left:31px;top:443px;width:300px;height:23px;overflow:hidden"><div class="t" style="left:3.00px;top:4.52px;font-size:16px;color:#000;transform:scaleX(1.015);transform-origin:0 0">7528a83d8a0b4c53b0df5f3c3728a203</div></div>
<div class="r" style="left:332px;top:443px;width:249px;height:23px;overflow:hidden"><div class="t" style="left:3.00px;top:4.52px;font-size:16px;color:#000;transform:scaleX(1.015);transform-origin:0 0">Ada Boost Classifier</div></div>
<div class="r" style="left:582px;top:443px;width:77px;height:23px;overflow:hidden"><div class="t" style="left:3.00px;top:5.06px;font-size:15.4px;color:#000;transform:scaleX(0.965);transform-origin:0 0">FINISHED</div></div>
<div class="r" style="left:660px;top:443px;width:121px;height:23px;overflow:hidden"><div class="t" style="left:3.00px;top:4.52px;font-size:16px;color:#000;transform:scaleX(1.015);transform-origin:0 0">2020-08-05 18:12:09.245000+00:00</div></div>
<div class="r" style="left:782px;top:443px;width:105px;height:23px;overflow:hidden"><div class="t" style="left:3.00px;top:4.52px;font-size:16px;color:#000;transform:scaleX(1.015);transform-origin:0 0">2020-08-05 18:12:09.245000+00:00</div></div>
<div class="t" style="left:925.73px;top:447.52px;font-size:16px;color:#000;transform:scaleX(1.0100);transform-origin:0 0;">0.5881</div>
<div class="t" style="left:1023.73px;top:447.52px;font-size:16px;color:#000;transform:scaleX(1.0100);transform-origin:0 0;">0.8075</div>
<div class="t" style="left:1121.73px;top:447.52px;font-size:16px;color:#000;transform:scaleX(1.0100);transform-origin:0 0;">0.8637</div>
<div class="t" style="left:1219.73px;top:447.52px;font-size:16px;color:#000;transform:scaleX(1.0100);transform-origin:0 0;">0.5924</div>
<div class="t" style="left:1317.73px;top:447.52px;font-size:16px;color:#000;transform:scaleX(1.0100);transform-origin:0 0;">0.7053</div>
<div class="t" style="left:1415.73px;top:447.52px;font-size:16px;color:#000;transform:scaleX(1.0100);transform-origin:0 0;">0.0981</div>
<div class="t" style="left:1513.73px;top:447.52px;font-size:16px;color:#000;transform:scaleX(1.0100);transform-origin:0 0;">0.7398</div>
<div class="t" style="left:1611.73px;top:447.52px;font-size:16px;color:#000;transform:scaleX(1.0100);transform-origin:0 0;">0.7837</div>
<div class="r" style="left:31px;top:467px;width:300px;height:23px;overflow:hidden"><div class="t" style="left:3.00px;top:4.52px;font-size:16px;color:#000;transform:scaleX(1.015);transform-origin:0 0">08f00155b92c4c8e80fc394741e91e9d</div></div>
<div class="r" style="left:332px;top:467px;width:249px;height:23px;overflow:hidden"><div class="t" style="left:3.00px;top:4.52px;font-size:16px;color:#000;transform:scaleX(1.015);transform-origin:0 0">Quadratic Discriminant Analysis</div></div>
<div class="r" style="left:582px;top:467px;width:77px;height:23px;overflow:hidden"><div class="t" style="left:3.00px;top:5.06px;font-size:15.4px;color:#000;transform:scaleX(0.965);transform-origin:0 0">FINISHED</div></div>
<div class="r" style="left:660px;top:467px;width:121px;height:23px;overflow:hidden"><div class="t" style="left:3.00px;top:4.52px;font-size:16px;color:#000;transform:scaleX(1.015);transform-origin:0 0">2020-08-05 18:12:09.245000+00:00</div></div>
<div class="r" style="left:782px;top:467px;width:105px;height:23px;overflow:hidden"><div class="t" style="left:3.00px;top:4.52px;font-size:16px;color:#000;transform:scaleX(1.015);transform-origin:0 0">2020-08-05 18:12:09.245000+00:00</div></div>
<div class="t" style="left:925.73px;top:471.52px;font-size:16px;color:#000;transform:scaleX(1.0100);transform-origin:0 0;">0.4890</div>
<div class="t" style="left:1023.73px;top:471.52px;font-size:16px;color:#000;transform:scaleX(1.0100);transform-origin:0 0;">0.7594</div>
<div class="t" style="left:1121.73px;top:471.52px;font-size:16px;color:#000;transform:scaleX(1.0100);transform-origin:0 0;">0.8145</div>
<div class="t" style="left:1219.73px;top:471.52px;font-size:16px;color:#000;transform:scaleX(1.0100);transform-origin:0 0;">0.5005</div>
<div class="t" style="left:1317.73px;top:471.52px;font-size:16px;color:#000;transform:scaleX(1.0100);transform-origin:0 0;">0.6609</div>
<div class="t" style="left:1415.73px;top:471.52px;font-size:16px;color:#000;transform:scaleX(1.0100);transform-origin:0 0;">0.0035</div>
<div class="t" style="left:1513.73px;top:471.52px;font-size:16px;color:#000;transform:scaleX(1.0100);transform-origin:0 0;">0.6784</div>
<div class="t" style="left:1611.73px;top:471.52px;font-size:16px;color:#000;transform:scaleX(1.0100);transform-origin:0 0;">0.7222</div>
<div class="r" style="left:31px;top:491px;width:300px;height:23px;overflow:hidden"><div class="t" style="left:3.00px;top:4.52px;font-size:16px;color:#000;transform:scaleX(1.015);transform-origin:0 0">25c0c6a200fe497da2aece276404bb21</div></div>
<div class="r" style="left:332px;top:491px;width:249px;height:23px;overflow:hidden"><div class="t" style="left:3.00px;top:4.52px;font-size:16px;color:#000;transform:scaleX(1.015);transform-origin:0 0">Random Forest Classifier</div></div>
<div class="r" style="left:582px;top:491px;width:77px;height:23px;overflow:hidden"><div class="t" style="left:3.00px;top:5.06px;font-size:15.4px;color:#000;transform:scaleX(0.965);transform-origin:0 0">FINISHED</div></div>
<div class="r" style="left:660px;top:491px;width:121px;height:23px;overflow:hidden"><div class="t" style="left:3.00px;top:4.52px;font-size:16px;color:#000;transform:scaleX(1.015);transform-origin:0 0">2020-08-05 18:12:09.245000+00:00</div></div>
<div class="r" style="left:782px;top:491px;width:105px;height:23px;overflow:hidden"><div class="t" style="left:3.00px;top:4.52px;font-size:16px;color:#000;transform:scaleX(1.015);transform-origin:0 0">2020-08-05 18:12:09.245000+00:00</div></div>
<div class="t" style="left:925.73px;top:495.52px;font-size:16px;color:#000;transform:scaleX(1.0100);transform-origin:0 0;">0.4928</div>
<div class="t" style="left:1023.73px;top:495.52px;font-size:16px;color:#000;transform:scaleX(1.0100);transform-origin:0 0;">0.7608</div>
<div class="t" style="left:1121.73px;top:495.52px;font-size:16px;color:#000;transform:scaleX(1.0100);transform-origin:0 0;">0.8397</div>
<div class="t" style="left:1219.73px;top:495.52px;font-size:16px;color:#000;transform:scaleX(1.0100);transform-origin:0 0;">0.4974</div>
<div class="t" style="left:1317.73px;top:495.52px;font-size:16px;color:#000;transform:scaleX(1.0100);transform-origin:0 0;">0.6674</div>
<div class="t" style="left:1415.73px;top:495.52px;font-size:16px;color:#000;transform:scaleX(1.0100);transform-origin:0 0;">0.1089</div>
<div class="t" style="left:1513.73px;top:495.52px;font-size:16px;color:#000;transform:scaleX(1.0100);transform-origin:0 0;">0.6848</div>
<div class="t" style="left:1611.73px;top:495.52px;font-size:16px;color:#000;transform:scaleX(1.0100);transform-origin:0 0;">0.7124</div>
<div class="t" style="left:1782.00px;top:495.52px;font-size:16px;color:#000;">None</div>
<div class="r" style="left:31px;top:515px;width:300px;height:23px;overflow:hidden"><div class="t" style="left:3.00px;top:4.52px;font-size:16px;color:#000;transform:scaleX(1.015);transform-origin:0 0">8fd00beeb7504e30ab63bc9ce78e06ba</div></div>
<div class="r" style="left:332px;top:515px;width:249px;height:23px;overflow:hidden"><div class="t" style="left:3.00px;top:4.52px;font-size:16px;color:#000;transform:scaleX(1.015);transform-origin:0 0">Ridge Classifier</div></div>
<div class="r" style="left:582px;top:515px;width:77px;height:23px;overflow:hidden"><div class="t" style="left:3.00px;top:5.06px;font-size:15.4px;color:#000;transform:scaleX(0.965);transform-origin:0 0">FINISHED</div></div>
<div class="r" style="left:660px;top:515px;width:121px;height:23px;overflow:hidden"><div class="t" style="left:3.00px;top:4.52px;font-size:16px;color:#000;transform:scaleX(1.015);transform-origin:0 0">2020-08-05 18:12:09.245000+00:00</div></div>
<div class="r" style="left:782px;top:515px;width:105px;height:23px;overflow:hidden"><div class="t" style="left:3.00px;top:4.52px;font-size:16px;color:#000;transform:scaleX(1.015);transform-origin:0 0">2020-08-05 18:12:09.245000+00:00</div></div>
<div class="t" style="left:925.73px;top:519.52px;font-size:16px;color:#000;transform:scaleX(1.0100);transform-origin:0 0;">0.6262</div>
<div class="t" style="left:1023.73px;top:519.52px;font-size:16px;color:#000;transform:scaleX(1.0100);transform-origin:0 0;">0.8236</div>
<div class="t" style="left:1147.84px;top:519.52px;font-size:16px;color:#000;">-</div>
<div class="t" style="left:1219.73px;top:519.52px;font-size:16px;color:#000;transform:scaleX(1.0100);transform-origin:0 0;">0.6292</div>
<div class="t" style="left:1317.73px;top:519.52px;font-size:16px;color:#000;transform:scaleX(1.0100);transform-origin:0 0;">0.7499</div>
<div class="t" style="left:1415.73px;top:519.52px;font-size:16px;color:#000;transform:scaleX(1.0100);transform-origin:0 0;">0.0044</div>
<div class="t" style="left:1513.73px;top:519.52px;font-size:16px;color:#000;transform:scaleX(1.0100);transform-origin:0 0;">0.7680</div>
<div class="t" style="left:1611.73px;top:519.52px;font-size:16px;color:#000;transform:scaleX(1.0100);transform-origin:0 0;">0.7920</div>
<div class="r" style="left:31px;top:539px;width:300px;height:23px;overflow:hidden"><div class="t" style="left:3.00px;top:4.52px;font-size:16px;color:#000;transform:scaleX(1.015);transform-origin:0 0">9f474b760d6945618b4a009bf8fce2b5</div></div>
<div class="r" style="left:332px;top:539px;width:249px;height:23px;overflow:hidden"><div class="t" style="left:3.00px;top:4.52px;font-size:16px;color:#000;transform:scaleX(1.015);transform-origin:0 0">SVM - Linear Kernel</div></div>
<div class="r" style="left:582px;top:539px;width:77px;height:23px;overflow:hidden"><div class="t" style="left:3.00px;top:5.06px;font-size:15.4px;color:#000;transform:scaleX(0.965);transform-origin:0 0">FINISHED</div></div>
<div class="r" style="left:660px;top:539px;width:121px;height:23px;overflow:hidden"><div class="t" style="left:3.00px;top:4.52px;font-size:16px;color:#000;transform:scaleX(1.015);transform-origin:0 0">2020-08-05 18:12:09.245000+00:00</div></div>
<div class="r" style="left:782px;top:539px;width:105px;height:23px;overflow:hidden"><div class="t" style="left:3.00px;top:4.52px;font-size:16px;color:#000;transform:scaleX(1.015);transform-origin:0 0">2020-08-05 18:12:09.245000+00:00</div></div>
<div class="t" style="left:925.73px;top:543.52px;font-size:16px;color:#000;transform:scaleX(1.0100);transform-origin:0 0;">0.0204</div>
<div class="t" style="left:1023.73px;top:543.52px;font-size:16px;color:#000;transform:scaleX(1.0100);transform-origin:0 0;">0.5267</div>
<div class="t" style="left:1147.84px;top:543.52px;font-size:16px;color:#000;">-</div>
<div class="t" style="left:1219.73px;top:543.52px;font-size:16px;color:#000;transform:scaleX(1.0100);transform-origin:0 0;">0.0299</div>
<div class="t" style="left:1317.73px;top:543.52px;font-size:16px;color:#000;transform:scaleX(1.0100);transform-origin:0 0;">0.4200</div>
<div class="t" style="left:1415.73px;top:543.52px;font-size:16px;color:#000;transform:scaleX(1.0100);transform-origin:0 0;">0.0083</div>
<div class="t" style="left:1513.73px;top:543.52px;font-size:16px;color:#000;transform:scaleX(1.0100);transform-origin:0 0;">0.2561</div>
<div class="t" style="left:1611.73px;top:543.52px;font-size:16px;color:#000;transform:scaleX(1.0100);transform-origin:0 0;">0.2409</div>
<div class="r" style="left:31px;top:563px;width:300px;height:23px;overflow:hidden"><div class="t" style="left:3.00px;top:4.52px;font-size:16px;color:#000;transform:scaleX(1.015);transform-origin:0 0">c761258aeb134796a809a1665d105709</div></div>
<div class="r" style="left:332px;top:563px;width:249px;height:23px;overflow:hidden"><div class="t" style="left:3.00px;top:4.52px;font-size:16px;color:#000;transform:scaleX(1.015);transform-origin:0 0">Decision Tree Classifier</div></div>
<div class="r" style="left:582px;top:563px;width:77px;height:23px;overflow:hidden"><div class="t" style="left:3.00px;top:5.06px;font-size:15.4px;color:#000;transform:scaleX(0.965);transform-origin:0 0">FINISHED</div></div>
<div class="r" style="left:660px;top:563px;width:121px;height:23px;overflow:hidden"><div class="t" style="left:3.00px;top:4.52px;font-size:16px;color:#000;transform:scaleX(1.015);transform-origin:0 0">2020-08-05 18:12:09.245000+00:00</div></div>
<div class="r" style="left:782px;top:563px;width:105px;height:23px;overflow:hidden"><div class="t" style="left:3.00px;top:4.52px;font-size:16px;color:#000;transform:scaleX(1.015);transform-origin:0 0">2020-08-05 18:12:09.245000+00:00</div></div>
<div class="t" style="left:925.73px;top:567.52px;font-size:16px;color:#000;transform:scaleX(1.0100);transform-origin:0 0;">0.4943</div>
<div class="t" style="left:1023.73px;top:567.52px;font-size:16px;color:#000;transform:scaleX(1.0100);transform-origin:0 0;">0.7594</div>
<div class="t" style="left:1121.73px;top:567.52px;font-size:16px;color:#000;transform:scaleX(1.0100);transform-origin:0 0;">0.7519</div>
<div class="t" style="left:1219.73px;top:567.52px;font-size:16px;color:#000;transform:scaleX(1.0100);transform-origin:0 0;">0.4975</div>
<div class="t" style="left:1318.93px;top:567.52px;font-size:16px;color:#000;transform:scaleX(1.0100);transform-origin:0 0;">0.6911</div>
<div class="t" style="left:1415.73px;top:567.52px;font-size:16px;color:#000;transform:scaleX(1.0100);transform-origin:0 0;">0.0048</div>
<div class="t" style="left:1513.73px;top:567.52px;font-size:16px;color:#000;transform:scaleX(1.0100);transform-origin:0 0;">0.6907</div>
<div class="t" style="left:1611.73px;top:567.52px;font-size:16px;color:#000;transform:scaleX(1.0100);transform-origin:0 0;">0.6970</div>
<div class="t" style="left:1782.00px;top:567.52px;font-size:16px;color:#000;">None</div>
<div class="r" style="left:31px;top:587px;width:300px;height:23px;overflow:hidden"><div class="t" style="left:3.00px;top:4.52px;font-size:16px;color:#000;transform:scaleX(1.015);transform-origin:0 0">ae702fae23ff449393b205940273d99d</div></div>
<div class="r" style="left:332px;top:587px;width:249px;height:23px;overflow:hidden"><div class="t" style="left:3.00px;top:4.52px;font-size:16px;color:#000;transform:scaleX(1.015);transform-origin:0 0">Naive Bayes</div></div>
<div class="r" style="left:582px;top:587px;width:77px;height:23px;overflow:hidden"><div class="t" style="left:3.00px;top:5.06px;font-size:15.4px;color:#000;transform:scaleX(0.965);transform-origin:0 0">FINISHED</div></div>
<div class="r" style="left:660px;top:587px;width:121px;height:23px;overflow:hidden"><div class="t" style="left:3.00px;top:4.52px;font-size:16px;color:#000;transform:scaleX(1.015);transform-origin:0 0">2020-08-05 18:12:09.245000+00:00</div></div>
<div class="r" style="left:782px;top:587px;width:105px;height:23px;overflow:hidden"><div class="t" style="left:3.00px;top:4.52px;font-size:16px;color:#000;transform:scaleX(1.015);transform-origin:0 0">2020-08-05 18:12:09.245000+00:00</div></div>
<div class="t" style="left:925.73px;top:591.52px;font-size:16px;color:#000;transform:scaleX(1.0100);transform-origin:0 0;">0.4227</div>
<div class="t" style="left:1023.73px;top:591.52px;font-size:16px;color:#000;transform:scaleX(1.0100);transform-origin:0 0;">0.7140</div>
<div class="t" style="left:1121.73px;top:591.52px;font-size:16px;color:#000;transform:scaleX(1.0100);transform-origin:0 0;">0.7952</div>
<div class="t" style="left:1219.73px;top:591.52px;font-size:16px;color:#000;transform:scaleX(1.0100);transform-origin:0 0;">0.4301</div>
<div class="t" style="left:1317.73px;top:591.52px;font-size:16px;color:#000;transform:scaleX(1.0100);transform-origin:0 0;">0.7466</div>
<div class="t" style="left:1415.73px;top:591.52px;font-size:16px;color:#000;transform:scaleX(1.0100);transform-origin:0 0;">0.0035</div>
<div class="t" style="left:1513.73px;top:591.52px;font-size:16px;color:#000;transform:scaleX(1.0100);transform-origin:0 0;">0.6708</div>
<div class="t" style="left:1611.73px;top:591.52px;font-size:16px;color:#000;transform:scaleX(1.0100);transform-origin:0 0;">0.6100</div>
<div class="r" style="left:31px;top:611px;width:300px;height:23px;overflow:hidden"><div class="t" style="left:3.00px;top:4.52px;font-size:16px;color:#000;transform:scaleX(1.015);transform-origin:0 0">7b3f1327cf074eecba61f47420a7199e</div></div>
<div class="r" style="left:332px;top:611px;width:249px;height:23px;overflow:hidden"><div class="t" style="left:3.00px;top:4.52px;font-size:16px;color:#000;transform:scaleX(1.015);transform-origin:0 0">K Neighbors Classifier</div></div>
<div class="r" style="left:582px;top:611px;width:77px;height:23px;overflow:hidden"><div class="t" style="left:3.00px;top:5.06px;font-size:15.4px;color:#000;transform:scaleX(0.965);transform-origin:0 0">FINISHED</div></div>
<div class="r" style="left:660px;top:611px;width:121px;height:23px;overflow:hidden"><div class="t" style="left:3.00px;top:4.52px;font-size:16px;color:#000;transform:scaleX(1.015);transform-origin:0 0">2020-08-05 18:12:09.245000+00:00</div></div>
<div class="r" style="left:782px;top:611px;width:105px;height:23px;overflow:hidden"><div class="t" style="left:3.00px;top:4.52px;font-size:16px;color:#000;transform:scaleX(1.015);transform-origin:0 0">2020-08-05 18:12:09.245000+00:00</div></div>
<div class="t" style="left:925.73px;top:615.52px;font-size:16px;color:#000;transform:scaleX(1.0100);transform-origin:0 0;">0.4094</div>
<div class="t" style="left:1023.73px;top:615.52px;font-size:16px;color:#000;transform:scaleX(1.0100);transform-origin:0 0;">0.7231</div>
<div class="t" style="left:1121.73px;top:615.52px;font-size:16px;color:#000;transform:scaleX(1.0100);transform-origin:0 0;">0.7683</div>
<div class="t" style="left:1219.73px;top:615.52px;font-size:16px;color:#000;transform:scaleX(1.0100);transform-origin:0 0;">0.4129</div>
<div class="t" style="left:1317.73px;top:615.52px;font-size:16px;color:#000;transform:scaleX(1.0100);transform-origin:0 0;">0.6062</div>
<div class="t" style="left:1415.73px;top:615.52px;font-size:16px;color:#000;transform:scaleX(1.0100);transform-origin:0 0;">0.0036</div>
<div class="t" style="left:1513.73px;top:615.52px;font-size:16px;color:#000;transform:scaleX(1.0100);transform-origin:0 0;">0.6287</div>
<div class="t" style="left:1611.73px;top:615.52px;font-size:16px;color:#000;transform:scaleX(1.0100);transform-origin:0 0;">0.6600</div>
<div class="r" style="left:31px;top:635px;width:300px;height:23px;overflow:hidden"><div class="t" style="left:3.00px;top:4.52px;font-size:16px;color:#000;transform:scaleX(1.015);transform-origin:0 0">07da9a6eb14f40d8bfd8d7b282c6e6f0</div></div>
<div class="r" style="left:332px;top:635px;width:249px;height:23px;overflow:hidden"><div class="t" style="left:3.00px;top:4.52px;font-size:16px;color:#000;transform:scaleX(1.015);transform-origin:0 0">Logistic Regression</div></div>
<div class="r" style="left:582px;top:635px;width:77px;height:23px;overflow:hidden"><div class="t" style="left:3.00px;top:5.06px;font-size:15.4px;color:#000;transform:scaleX(0.965);transform-origin:0 0">FINISHED</div></div>
<div class="r" style="left:660px;top:635px;width:121px;height:23px;overflow:hidden"><div class="t" style="left:3.00px;top:4.52px;font-size:16px;color:#000;transform:scaleX(1.015);transform-origin:0 0">2020-08-05 18:12:09.245000+00:00</div></div>
<div class="r" style="left:782px;top:635px;width:105px;height:23px;overflow:hidden"><div class="t" style="left:3.00px;top:4.52px;font-size:16px;color:#000;transform:scaleX(1.015);transform-origin:0 0">2020-08-05 18:12:09.245000+00:00</div></div>
<div class="t" style="left:925.73px;top:639.52px;font-size:16px;color:#000;transform:scaleX(1.0100);transform-origin:0 0;">0.6280</div>
<div class="t" style="left:1023.73px;top:639.52px;font-size:16px;color:#000;transform:scaleX(1.0100);transform-origin:0 0;">0.8263</div>
<div class="t" style="left:1121.73px;top:639.52px;font-size:16px;color:#000;transform:scaleX(1.0100);transform-origin:0 0;">0.8953</div>
<div class="t" style="left:1219.73px;top:639.52px;font-size:16px;color:#000;transform:scaleX(1.0100);transform-origin:0 0;">0.6338</div>
<div class="t" style="left:1317.73px;top:639.52px;font-size:16px;color:#000;transform:scaleX(1.0100);transform-origin:0 0;">0.7262</div>
<div class="t" style="left:1415.73px;top:639.52px;font-size:16px;color:#000;transform:scaleX(1.0100);transform-origin:0 0;">0.0412</div>
<div class="t" style="left:1513.73px;top:639.52px;font-size:16px;color:#000;transform:scaleX(1.0100);transform-origin:0 0;">0.7644</div>
<div class="t" style="left:1611.73px;top:639.52px;font-size:16px;color:#000;transform:scaleX(1.0100);transform-origin:0 0;">0.8139</div>
<div class="r" style="left:31px;top:659px;width:300px;height:23px;overflow:hidden"><div class="t" style="left:3.00px;top:4.52px;font-size:16px;color:#000;transform:scaleX(1.015);transform-origin:0 0">89ce83b1ae95408cb055c6746a0b3cc4</div></div>
<div class="r" style="left:332px;top:659px;width:249px;height:23px;overflow:hidden"><div class="t" style="left:3.00px;top:4.52px;font-size:16px;color:#000;transform:scaleX(1.015);transform-origin:0 0">Session Initialized 2a1f</div></div>
<div class="r" style="left:582px;top:659px;width:77px;height:23px;overflow:hidden"><div class="t" style="left:3.00px;top:5.06px;font-size:15.4px;color:#000;transform:scaleX(0.965);transform-origin:0 0">FINISHED</div></div>
<div class="r" style="left:660px;top:659px;width:121px;height:23px;overflow:hidden"><div class="t" style="left:3.00px;top:4.52px;font-size:16px;color:#000;transform:scaleX(1.015);transform-origin:0 0">2020-08-05 18:12:09.245000+00:00</div></div>
<div class="r" style="left:782px;top:659px;width:398px;height:23px;overflow:hidden"><div class="t" style="left:3.00px;top:4.52px;font-size:16px;color:#000;transform:scaleX(1.015);transform-origin:0 0">2020-08-05 18:12:09.245000+00:00</div></div>
<div class="r" style="left:1376px;top:898px;width:97px;height:23px;border:2px solid #217346;border-right:none;border-bottom:none"></div>
<div class="r" style="left:1376px;top:898px;width:101px;height:27px;border-right:2px solid #217346;border-bottom:2px solid #217346;box-sizing:border-box;clip-path:polygon(0 0,100% 0,100% 78%,0 78%)"></div>
<div class="r" style="left:1376px;top:923px;width:96px;height:2px;background:#217346"></div>
<div class="r" style="left:1473px;top:921px;width:5px;height:5px;background:#217346;outline:1px solid #fff"></div>
<div class="r" style="left:1894px;top:252px;width:21px;height:719px;background:#e6e6e6"></div>
<div class="r" style="left:1895px;top:254px;width:19px;height:19px;background:#fff;border:1px solid #c6c6c6;box-sizing:border-box"></div>
<svg class="r" style="left:1900px;top:260px" width="9" height="5" viewBox="0 0 9 5" fill="none"><path d="M0 5 H9 L4.5 0 Z" fill="#777"/></svg>
<div class="r" style="left:1895px;top:273px;width:19px;height:655px;background:#fff;border:1px solid #c6c6c6;box-sizing:border-box"></div>
<div class="r" style="left:1895px;top:928px;width:19px;height:25px;background:#d4d4d4"></div>
<div class="r" style="left:1895px;top:953px;width:19px;height:19px;background:#fff;border:1px solid #c6c6c6;box-sizing:border-box"></div>
<svg class="r" style="left:1900px;top:961px" width="9" height="5" viewBox="0 0 9 5" fill="none"><path d="M0 0 H9 L4.5 5 Z" fill="#777"/></svg>
<div class="r" style="left:0px;top:972px;width:1915px;height:28px;background:#e6e6e6"></div>
<div class="r" style="left:0px;top:1000px;width:1915px;height:1px;background:#c8c8c8"></div>
<div class="r" style="left:100px;top:971px;width:154px;height:26px;background:#fff;border-left:1px solid #bdbdbd;border-right:1px solid #bdbdbd;box-sizing:border-box"></div>
<div class="r" style="left:100px;top:995px;width:154px;height:2px;background:#217346"></div>
<div class="t" style="left:112.30px;top:972.22px;font-size:17px;color:#217346;font-weight:bold;transform:scaleX(0.9623);transform-origin:0 0;">exp_github_logs</div>
<svg class="r" style="left:24px;top:980px" width="7" height="11" viewBox="0 0 7 11" fill="none"><path d="M6 0 V11 L0 5.5 Z" fill="#c0c0c0"/></svg>
<svg class="r" style="left:54px;top:980px" width="7" height="11" viewBox="0 0 7 11" fill="none"><path d="M0 0 V11 L6 5.5 Z" fill="#c0c0c0"/></svg>
<svg class="r" style="left:287px;top:976px" width="20" height="20" viewBox="0 0 20 20" fill="none"><circle cx="10" cy="10" r="9.3" fill="none" stroke="#777" stroke-width="1.2"/><path d="M10 4.5 V15.5 M4.5 10 H15.5" stroke="#555" stroke-width="1.5"/></svg>
<div class="r" style="left:1146px;top:978px;width:3px;height:3px;background:#a6a6a6"></div>
<div class="r" style="left:1146px;top:983px;width:3px;height:3px;background:#a6a6a6"></div>
<div class="r" style="left:1146px;top:988px;width:3px;height:3px;background:#a6a6a6"></div>
<div class="r" style="left:1164px;top:976px;width:19px;height:19px;background:#fff;border:1px solid #c6c6c6;box-sizing:border-box"></div>
<svg class="r" style="left:1170px;top:981px" width="5" height="9" viewBox="0 0 5 9" fill="none"><path d="M5 0 V9 L0 4.5 Z" fill="#777"/></svg>
<div class="r" style="left:1182px;top:976px;width:49px;height:19px;background:#fff;border:1px solid #c6c6c6;box-sizing:border-box"></div>
<div class="r" style="left:1231px;top:976px;width:642px;height:19px;background:#d4d4d4"></div>
<div class="r" style="left:1873px;top:976px;width:19px;height:19px;background:#fff;border:1px solid #c6c6c6;box-sizing:border-box"></div>
<svg class="r" style="left:1880px;top:981px" width="5" height="9" viewBox="0 0 5 9" fill="none"><path d="M0 0 V9 L5 4.5 Z" fill="#777"/></svg>
<div class="r" style="left:0px;top:1001px;width:1915px;height:22px;background:#f3f2f1"></div>
<svg class="r" style="left:7px;top:1006px" width="19" height="17" viewBox="0 0 19 17" fill="none"><rect x="0.6" y="0.6" width="17" height="15" fill="none" stroke="#666" stroke-width="1.1"/><path d="M0.6 3 H17.6 M3 6 H7 M3 9 H6 M3 12 H6" stroke="#666" stroke-width="1.1"/><circle cx="12.5" cy="11" r="4.6" fill="#f3f2f1" stroke="#555" stroke-width="1.2"/><circle cx="12.5" cy="11" r="2" fill="#555"/></svg>
<svg class="r" style="left:1408px;top:1005px" width="19" height="18" viewBox="0 0 19 18" fill="none"><path d="M8 12 H0.7 V0.7 H17 V7" fill="none" stroke="#555" stroke-width="1.1"/><circle cx="11" cy="13" r="3" fill="none" stroke="#555" stroke-width="1.6" stroke-dasharray="1.5 0.9"/></svg>
<div class="t" style="left:1429.40px;top:1008.40px;font-size:12.6px;color:#3b3a39;transform:scaleX(1.0113);transform-origin:0 0;">Display Settings</div>
<div class="r" style="left:1545px;top:1001px;width:50px;height:22px;background:#c8c6c4"></div>
<svg class="r" style="left:1561px;top:1006px" width="17" height="17" viewBox="0 0 17 17" fill="none"><path d="M0.6 0.6 H16.4 V16.4 H0.6 Z M0.6 6 H16.4 M0.6 11 H16.4 M6 0.6 V16.4 M11 0.6 V16.4" fill="none" stroke="#3b3a39" stroke-width="1.2"/></svg>
<svg class="r" style="left:1611px;top:1006px" width="19" height="17" viewBox="0 0 19 17" fill="none"><rect x="0.6" y="0.6" width="17.5" height="15.5" fill="none" stroke="#555" stroke-width="1.2"/><rect x="3.5" y="3.5" width="11.5" height="9.5" fill="none" stroke="#555" stroke-width="1"/><path d="M5.5 6 H13 M5.5 8.3 H13 M5.5 10.6 H13" stroke="#555" stroke-width="0.9"/></svg>
<svg class="r" style="left:1661px;top:1006px" width="18" height="17" viewBox="0 0 18 17" fill="none"><path d="M0.6 16.4 V0.6 H17 V16.4 M6 0.6 V10 H11.5 V0.6" fill="none" stroke="#555" stroke-width="1.2"/></svg>
<div class="r" style="left:1702px;top:1013px;width:10px;height:1px;background:#555"></div>
<div class="r" style="left:1718px;top:1013px;width:125px;height:1px;background:#a6a6a6"></div>
<div class="r" style="left:1778px;top:1007px;width:7px;height:14px;background:#6f6f6f"></div>
<div class="r" style="left:1848px;top:1013px;width:11px;height:1.3px;background:#555"></div>
<div class="r" style="left:1853px;top:1008px;width:1.3px;height:11px;background:#555"></div>
<div class="t" style="left:1876.00px;top:1008.59px;font-size:11.5px;color:#3b3a39;transform:scaleX(1.0207);transform-origin:0 0;">100%</div>
</body></html>
